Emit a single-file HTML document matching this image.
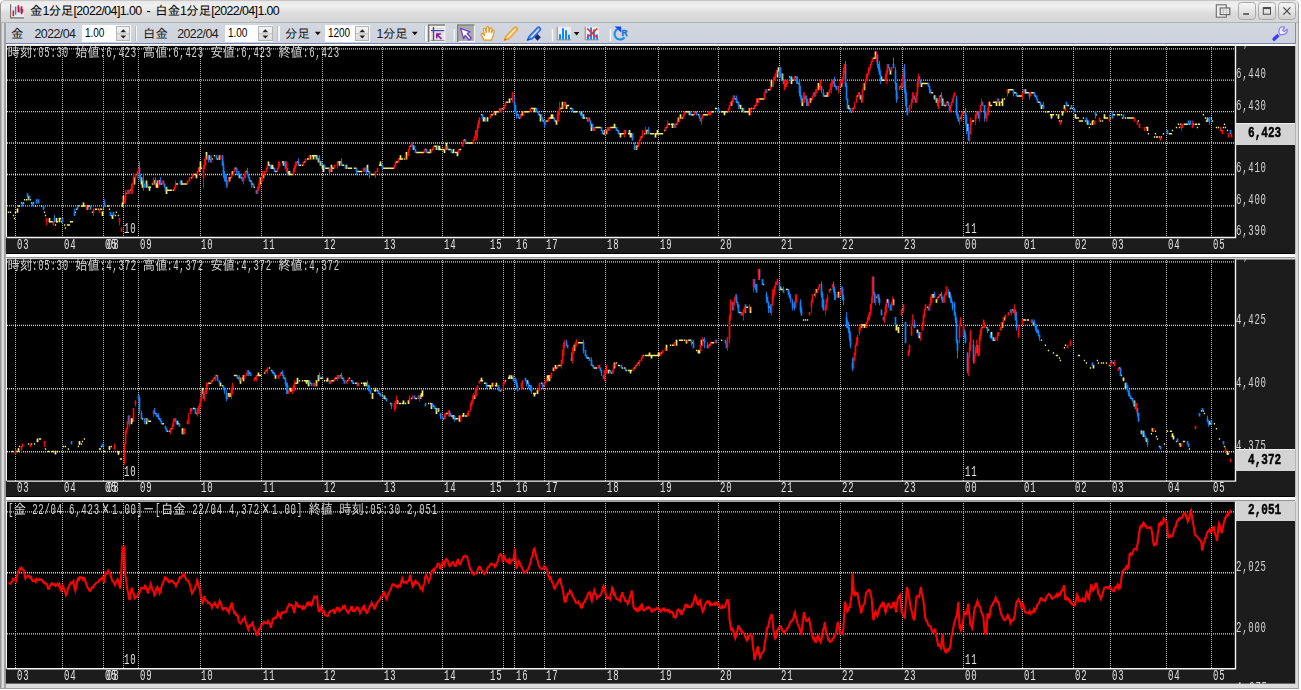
<!DOCTYPE html><html lang="ja"><head><meta charset="utf-8"><title>chart</title><style>
html,body{margin:0;padding:0}
body{width:1301px;height:690px;background:#fff;overflow:hidden;position:relative;font-family:"Liberation Sans","IPAGothic",sans-serif}
#win{position:absolute;left:0;top:0;width:1299px;height:689px;box-sizing:border-box;border:1px solid #a2a2a2;border-left:1.3px solid #959595;border-top-color:#c8c8c8;border-radius:5px 5px 0 0;background:linear-gradient(90deg,#b8b8b8 0,#b8b8b8 1px,#dedede 1.2px,#d8d8d8 3.3px,#a2a2a2 3.4px,#a2a2a2 4.6px,#dcdcdc 4.7px);overflow:hidden}
#title{position:absolute;left:0;top:0;width:1299px;height:22.2px;background:linear-gradient(#e6e6e6 0,#eaeaea 1px,#f0f0f0 5px,#eaeaea 8px,#dcdcdc 12px,#d7d7d7 20.7px,#b2b2b2 20.9px,#b2b2b2 22.2px);}
#ttext{position:absolute;left:30px;top:4px;font-size:12.4px;line-height:14px;color:#000;white-space:nowrap;letter-spacing:-0.6px;word-spacing:2.3px}
#ttext .j{letter-spacing:0}
#tool{position:absolute;left:5.8px;top:23.2px;width:1289.5px;height:19.6px;background:linear-gradient(#d3d7e0,#ced2dc);box-sizing:border-box}
#toolr{position:absolute;left:1295.2px;top:23px;width:1.2px;height:21px;background:#8e8e8e}
#toolb{position:absolute;left:5.8px;top:42.8px;width:1289.5px;height:1.5px;background:#7486a6}
#toolw{position:absolute;left:5.8px;top:44.3px;width:1289.5px;height:1.7px;background:#fdfdfd}
.tt{position:absolute;top:27.2px;font-size:12.4px;line-height:14px;color:#1a1a1a;white-space:nowrap;letter-spacing:-0.55px}
.tt .j{letter-spacing:0}
.inp{position:absolute;top:24.6px;height:17.6px;background:#fff;box-sizing:border-box}
.inp span{position:absolute;left:3.2px;top:1.4px;font-size:12.2px;line-height:14px;letter-spacing:-0.1px;color:#000;transform:scaleX(.82);transform-origin:0 0;white-space:nowrap}
.spin{position:absolute;right:0.5px;top:1px;width:14.5px;height:15.6px;background:linear-gradient(#f4f4f4,#dcdcdc);border:1px solid #b4b4b4;box-sizing:border-box}
.sep{position:absolute;top:26px;width:1.3px;height:15px;background:#f6f6f6;border-left:1px solid #b9bfcb}
.m{position:absolute;white-space:pre;font-family:"Liberation Mono","IPAGothic",monospace;font-size:12px;line-height:13px;color:#d6d6d6}
.m .j{font-size:12.3px;display:inline-block;transform:scaleY(1.13);transform-origin:0 58%}
.m .l{display:inline-block;letter-spacing:1px;transform:scale(.75,1.27);transform-origin:0 62%}
.m .x{display:inline-block;width:16.4px;text-align:center;font-style:normal;font-size:17px;line-height:10px;vertical-align:-1px}
.tl{color:#e2e2e2}
#txt{position:absolute;left:0;top:0;width:1301px;height:690px;will-change:transform;opacity:.999}
.box{position:absolute;left:1236.1px;width:59.1px;height:22.3px;background:#d4d4d4;border-top:1px solid #efefef;box-sizing:border-box}
.box b{position:absolute;left:11.8px;top:4.4px;font-family:"Liberation Mono",monospace;font-size:12px;line-height:13px;color:#000;font-weight:bold;-webkit-text-stroke:.35px #000;transform:scale(.92,1.2);transform-origin:0 62%;white-space:pre}
.band{position:absolute;left:5.9px;width:1289.3px;background:#fff}
.wb{position:absolute;top:2.3px;width:17.4px;height:17.3px;border:1px solid #a9a9a9;border-radius:3.5px;box-sizing:border-box;background:linear-gradient(#f6f6f6,#e4e4e4 50%,#d0d0d0)}
</style></head><body>
<div id="win">
<div id="title"></div>
</div>
<svg style="position:absolute;left:10px;top:4px" width="15" height="15" viewBox="0 0 15 15"><rect x="0.5" y="0.3" width="13.6" height="13.6" fill="#f1f1f1"/><path d="M0.6 0.3V13.8H14" stroke="#6e6e6e" stroke-width="1.2" fill="none"/><path d="M1.5 3.5H13.5M1.5 6H13.5M1.5 8.5H13.5M1.5 11H13.5" stroke="#dcdcdc" stroke-width=".7"/><path d="M3.3 6.5V12.2M8.3 1.2V8.2M11.6 2.3V10.2" stroke="#f01" stroke-width="1.5"/><path d="M5.6 2.4V10.8M9.9 3.6V8.8" stroke="#1389f2" stroke-width="1.4"/><path d="M12.6 5V8.6" stroke="#f01" stroke-width="1"/></svg>
<div id="ttext"><span class="j">金</span>1<span class="j">分足</span>[2022/04]1.00 - <span class="j">白金</span>1<span class="j">分足</span>[2022/04]1.00</div>
<svg style="position:absolute;left:1215px;top:3px" width="17" height="17" viewBox="0 0 17 17"><rect x="1.3" y="1.8" width="10" height="12.4" fill="#efefef" stroke="#6c6c6c" stroke-width="1.1"/><rect x="5.2" y="5" width="9.6" height="6.6" fill="#f4f4f4" stroke="#5a5a5a" stroke-width="1.1"/><path d="M5.6 7.2H14.4M5.6 9.4H14.4M8.4 5.4V11.2M11.4 5.4V11.2" stroke="#b9b9b9" stroke-width=".7"/></svg>
<div class="wb" style="left:1238.3px"><svg width="16" height="16" viewBox="0 0 16 16" style="position:absolute;left:0;top:0"><path d="M4.2 11H10" stroke="#4a4a4a" stroke-width="1.6"/></svg></div>
<div class="wb" style="left:1258.3px"><svg width="16" height="16" viewBox="0 0 16 16" style="position:absolute;left:0;top:0"><rect x="4.3" y="4.6" width="7.2" height="6.6" fill="none" stroke="#4a4a4a" stroke-width="1"/><path d="M4 5.2H11.8" stroke="#4a4a4a" stroke-width="1.8"/></svg></div>
<div class="wb" style="left:1278.3px"><svg width="16" height="16" viewBox="0 0 16 16" style="position:absolute;left:0;top:0"><path d="M4.4 4.4L11.4 11.6M11.4 4.4L4.4 11.6" stroke="#4a4a4a" stroke-width="1.3"/></svg></div>
<div id="tool"></div><div id="toolb"></div><div id="toolw"></div><div id="toolr"></div>
<div class="tt" style="left:11px"><span class="j">金</span></div>
<div class="tt" style="left:34.5px">2022/04</div>
<div class="inp" style="left:82px;width:48.5px"><span>1.00</span><div class="spin"><svg width="13" height="14" viewBox="0 0 13 14" style="position:absolute;left:0;top:0"><path d="M3.4 5.3L6.3 2.2L9.2 5.3ZM3.4 8.4L6.3 11.5L9.2 8.4Z" fill="#222"/><path d="M0 6.8H13" stroke="#b4b4b4" stroke-width=".8"/></svg></div></div>
<div class="sep" style="left:134.6px"></div>
<div class="tt" style="left:143px"><span class="j">白金</span></div>
<div class="tt" style="left:177.2px">2022/04</div>
<div class="inp" style="left:224.5px;width:48.5px"><span>1.00</span><div class="spin"><svg width="13" height="14" viewBox="0 0 13 14" style="position:absolute;left:0;top:0"><path d="M3.4 5.3L6.3 2.2L9.2 5.3ZM3.4 8.4L6.3 11.5L9.2 8.4Z" fill="#222"/><path d="M0 6.8H13" stroke="#b4b4b4" stroke-width=".8"/></svg></div></div>
<div class="sep" style="left:277.3px"></div>
<div class="tt" style="left:285px"><span class="j">分足</span></div>
<svg style="position:absolute;left:314px;top:31px" width="8" height="5" viewBox="0 0 8 5"><path d="M0.8 0.8H6.8L3.8 4.2Z" fill="#111"/></svg>
<div class="inp" style="left:324.6px;width:45px"><span>1200</span><div class="spin"><svg width="13" height="14" viewBox="0 0 13 14" style="position:absolute;left:0;top:0"><path d="M3.4 5.3L6.3 2.2L9.2 5.3ZM3.4 8.4L6.3 11.5L9.2 8.4Z" fill="#222"/><path d="M0 6.8H13" stroke="#b4b4b4" stroke-width=".8"/></svg></div></div>
<div class="tt" style="left:376.6px">1<span class="j">分足</span></div>
<svg style="position:absolute;left:411px;top:31px" width="8" height="5" viewBox="0 0 8 5"><path d="M0.8 0.8H6.8L3.8 4.2Z" fill="#111"/></svg>
<div class="sep" style="left:424.3px"></div>
<svg style="position:absolute;left:426px;top:22px" width="210" height="22" viewBox="426 22 210 22">
<!-- button 1 -->
<rect x="428.6" y="24.9" width="16.2" height="16.8" fill="#f3f3ee" stroke="#fafafa" stroke-width="1"/>
<path d="M428.7 42V25H445" stroke="#7c7c7c" stroke-width="1.5" fill="none"/>
<path d="M431 28.4H444M431 30.4H444M431 32.6H444M431 34.8H444M431 37H444M431 39.2H444" stroke="#cfcfc4" stroke-width=".9"/>
<path d="M430.6 40.6H444.4" stroke="#8c8c8c" stroke-width="1"/>
<path d="M433.5 27V40.6M431 30.7H444.2" stroke="#3b3fb2" stroke-width="1.3"/>
<path d="M436 33.2H441V34.6L438.8 35.2L442 38.3L440.8 39.4L437.7 36.3L437.2 38.4H436Z" fill="#8a1db0"/>
<!-- sep -->
<rect x="453.6" y="29" width="1.3" height="12" fill="#f8f8f8"/>
<!-- button 2 -->
<rect x="457.8" y="24.9" width="16.6" height="16.6" fill="#a9acaa" stroke="#fafafa" stroke-width="1"/>
<path d="M457.8 42V25H474.6" stroke="#7c7c7c" stroke-width="1.5" fill="none"/>
<path d="M460.6 28.4L470 31.8L467.2 33.6L471.2 38.2L469.2 40L465.2 35.5L463.6 38.6Z" fill="#fff" stroke="#6a40c4" stroke-width="1.3" stroke-linejoin="round"/>
<!-- hand -->
<path d="M484.2 40.2C483 38 482 36.5 481.2 34.8C480.8 33.6 482.2 33 483.2 34L484.6 35.4L483.4 29.6C483.2 28.2 485 27.8 485.4 29.2L486.4 32.4L486.6 27.6C486.6 26.2 488.6 26.2 488.7 27.6L489 32.2L490 28.4C490.4 27.2 492.2 27.6 492 29L491.4 33L492.6 30.8C493.2 29.8 494.6 30.4 494.2 31.6C493.6 34.6 493 37.4 491.4 40.2Z" fill="#fff8ec" stroke="#e09a30" stroke-width="1.2" stroke-linejoin="round"/>
<!-- pencil -->
<path d="M504.2 40.4L505.6 36.6L514.4 27.2C515.6 26 518.6 28.2 517.4 29.8L508.4 39.2Z" fill="#f8b860" stroke="#ee9e2c" stroke-width="1.2" stroke-linejoin="round"/>
<path d="M507.4 37.6L515.6 29" stroke="#fff6e2" stroke-width="1.3"/>
<path d="M504.2 40.4L505 38.4L506.4 39.6Z" fill="#9a6414"/>
<!-- marker -->
<path d="M534.2 37.3L537.5 33.9L540.8 37.3L537.5 40.7Z" fill="#122c78"/>
<path d="M527.2 40.2L529 36.4L537.4 27.4C538.8 26 541.8 28.4 540.4 30.2L532 39Z" fill="#5a90ee" stroke="#2a66d8" stroke-width="1.2" stroke-linejoin="round"/>
<path d="M531 37.4L538.8 29.2" stroke="#e4eeff" stroke-width="1.3"/>
<path d="M527 40.4L528.4 38L530 39.4Z" fill="#1a4fc0"/>

<!-- sep -->
<rect x="551.8" y="29" width="1.3" height="12" fill="#f8f8f8"/>
<!-- bar chart -->
<rect x="557.2" y="26.8" width="13.8" height="13" fill="#ededed"/>
<path d="M557.2 26.8V39.8H571" stroke="#8a8a8a" stroke-width="1" fill="none"/>
<path d="M560 39.6V34.2M563 39.6V28.2M566 39.6V30.2M569 39.6V34.8" stroke="#1088ff" stroke-width="2"/>
<path d="M573.8 32H579.4L576.6 35.6Z" fill="#111"/>
<!-- bar chart X -->
<rect x="585.2" y="26.8" width="13.8" height="13" fill="#ededed"/>
<path d="M585.2 26.8V39.8H599" stroke="#8a8a8a" stroke-width="1" fill="none"/>
<path d="M588 39.6V34.2M591 39.6V27.6M594 39.6V29.6M597 39.6V34.6" stroke="#1088ff" stroke-width="2"/>
<path d="M587 28.4L597.4 38M597.4 28.4L587 38" stroke="#ff2a2a" stroke-width="1.5"/>
<!-- sep -->
<rect x="609.8" y="29" width="1.3" height="12" fill="#f8f8f8"/>
<!-- refresh -->
<path d="M618.6 28.6A5.6 5.6 0 1 0 624.6 37.4" fill="none" stroke="#1b8fe2" stroke-width="2.1"/>
<path d="M614.6 26.4H621.2V32.4Z" fill="#1546ff"/>
<text x="621.6" y="36.2" font-family="Liberation Sans, sans-serif" font-weight="bold" font-size="8.4" fill="#1277d8" stroke="#1277d8" stroke-width=".4">R</text>
</svg>
<svg style="position:absolute;left:1270px;top:24px" width="20" height="19" viewBox="1270 24 20 19">
<path d="M1274 39.2L1278.8 34.6" stroke="#3838ff" stroke-width="3.3" stroke-linecap="round"/>
<path d="M1278.4 34.9L1279.6 33.6" stroke="#f2f0ff" stroke-width="3.2"/>
<path d="M1284.6 27.2C1282 25.9 1279.2 27.6 1279 30.4C1278.9 31.8 1279.2 32.8 1279 33.6L1280.2 34.8C1281.6 34.3 1283.4 35 1285 34C1286.8 33 1287.6 31 1287 29.2L1284.2 31.6L1282.6 30.2Z" fill="#efecff" stroke="#7a76e6" stroke-width="1.1" stroke-linejoin="round"/>
</svg>

<svg width="1301" height="690" viewBox="0 0 1301 690" style="position:absolute;left:0;top:0">
<rect x="5.9" y="45.9" width="1289.3" height="207.1" fill="#1c1c1c"/>
<rect x="5.9" y="44.4" width="1289.3" height="1.5" fill="#fdfdfd"/>
<rect x="5.9" y="44.4" width="1.2" height="193.1" fill="#f4f4f4"/>
<rect x="7" y="45.9" width="1228.5" height="191.6" fill="#000"/>
<rect x="5.9" y="259.3" width="1289.3" height="236.7" fill="#1c1c1c"/>
<rect x="5.9" y="257.8" width="1289.3" height="1.5" fill="#d6d6d6"/>
<rect x="5.9" y="257.8" width="1.2" height="223.3" fill="#f4f4f4"/>
<rect x="7" y="259.3" width="1228.5" height="221.8" fill="#000"/>
<rect x="5.9" y="501.8" width="1289.3" height="181.8" fill="#1c1c1c"/>
<rect x="5.9" y="500.3" width="1289.3" height="1.5" fill="#d6d6d6"/>
<rect x="5.9" y="500.3" width="1.2" height="168.4" fill="#f4f4f4"/>
<rect x="7" y="501.8" width="1228.5" height="166.9" fill="#000"/>
<path d="M7 48.8H1235.5M7 80.1H1235.5M7 111.6H1235.5M7 143H1235.5M7 174.5H1235.5M7 205.9H1235.5M7 261.8H1235.5M7 325.4H1235.5M7 388.7H1235.5M7 451.7H1235.5M7 511.8H1235.5M7 572.7H1235.5M7 633.8H1235.5" stroke="#d0d0d0" stroke-width="1.35" stroke-dasharray="1 1" fill="none"/>
<path d="M15.5 47V237.5M62.5 47V237.5M103.5 47V237.5M123.5 47V237.5M138.5 47V237.5M200.5 47V237.5M261.5 47V237.5M322.5 47V237.5M382.5 47V237.5M442.5 47V237.5M503.5 47V237.5M514.5 47V237.5M544.5 47V237.5M605.5 47V237.5M658.5 47V237.5M718.5 47V237.5M779.5 47V237.5M840.5 47V237.5M902.5 47V237.5M963.5 47V237.5M1022.5 47V237.5M1073.5 47V237.5M1110.5 47V237.5M1166.5 47V237.5M1211.5 47V237.5M15.5 260V481.1M62.5 260V481.1M103.5 260V481.1M123.5 260V481.1M138.5 260V481.1M200.5 260V481.1M261.5 260V481.1M322.5 260V481.1M382.5 260V481.1M442.5 260V481.1M503.5 260V481.1M514.5 260V481.1M544.5 260V481.1M605.5 260V481.1M658.5 260V481.1M718.5 260V481.1M779.5 260V481.1M840.5 260V481.1M902.5 260V481.1M963.5 260V481.1M1022.5 260V481.1M1073.5 260V481.1M1110.5 260V481.1M1166.5 260V481.1M1211.5 260V481.1M15.5 503V668.7M62.5 503V668.7M103.5 503V668.7M123.5 503V668.7M138.5 503V668.7M200.5 503V668.7M261.5 503V668.7M322.5 503V668.7M382.5 503V668.7M442.5 503V668.7M503.5 503V668.7M514.5 503V668.7M544.5 503V668.7M605.5 503V668.7M658.5 503V668.7M718.5 503V668.7M779.5 503V668.7M840.5 503V668.7M902.5 503V668.7M963.5 503V668.7M1022.5 503V668.7M1073.5 503V668.7M1110.5 503V668.7M1166.5 503V668.7M1211.5 503V668.7" stroke="#bcbcbc" stroke-width="1" stroke-dasharray="1 1" fill="none"/>
<path d="M7 237.5H1235.5V45.9M7 481.1H1235.5V259.3M7 668.7H1235.5V501.8" stroke="#f4f4f4" stroke-width="1.4" fill="none"/>
<g fill="none" stroke-width="1.7">
<path d="M7.8 212.3h1.3M9.8 212.3h1.3M12.8 215.5h1.3M13.8 218.6h1.3M14.8 212.3h1.3M16.9 209.2h1.3M17.9 206.1h1.3M18.9 206.1h1.3M20.9 202.9h1.3M22.9 202.9h1.3M23.9 199.8h1.3M25.9 199.8h1.3M27.9 196.6h1.3M29.9 199.8h1.3M30.9 202.9h1.3M32.9 202.9h1.3M34.9 206.1h1.3M40.9 206.1h1.3M43.9 212.3h1.3M44.9 215.5h1.3M48.9 221.8h1.3M49.9 221.8h1.3M50.9 221.8h1.3M51.9 221.8h1.3M54.9 224.9h1.3M55.9 221.8h1.3M56.9 221.8h1.3M58.9 218.6h1.3M59.9 218.6h1.3M60.9 221.8h1.3M63.9 224.9h1.3M64.8 228.1h1.3M66.8 224.9h1.3M67.8 224.9h1.3M68.8 224.9h1.3M69.8 221.8h1.3M70.8 221.8h1.3M71.8 221.8h1.3M74.8 212.3h1.3M75.8 209.2h1.3M77.8 206.1h1.3M80.8 206.1h1.3M81.8 206.1h1.3M82.8 206.1h1.3M83.8 206.1h1.3M86.8 206.1h1.3M87.8 206.1h1.3M88.8 206.1h1.3M91.8 212.3h1.3M94.8 209.2h1.3M95.8 209.2h1.3M97.8 209.2h1.3M99.8 209.2h1.3M100.8 209.2h1.3M101.8 212.3h1.3M102.8 209.2h1.3M106.8 206.1h1.3M107.8 206.1h1.3M108.8 209.2h1.3M110.8 215.5h1.3M111.8 215.5h1.3M114.8 215.5h1.3M115.8 212.3h1.3M117.8 215.5h1.3M121.8 206.1h1.3M125.8 193.5h1.3M129.8 190.3h1.3M135.8 174.6h1.3M147.8 187.2h1.3M148.8 187.2h1.3M149.8 187.2h1.3M151.8 184h1.3M153.8 180.9h1.3M155.8 184h1.3M158.8 180.9h1.3M160.8 184h1.3M166.8 190.3h1.3M167.8 190.3h1.3M168.8 190.3h1.3M169.8 190.3h1.3M170.8 190.3h1.3M172.8 190.3h1.3M175.8 184h1.3M176.8 184h1.3M180.8 184h1.3M181.8 184h1.3M182.8 184h1.3M183.8 184h1.3M184.8 184h1.3M185.8 184h1.3M190.8 177.7h1.3M192.8 174.6h1.3M193.8 174.6h1.3M194.8 174.6h1.3M195.8 174.6h1.3M198.8 168.3h1.3M200.8 168.3h1.3M208.8 158.9h1.3M211.8 158.9h1.3M213.8 155.7h1.3M216.8 158.9h1.3M218.8 158.9h1.3M228.8 177.7h1.3M229.8 177.7h1.3M231.8 174.6h1.3M234.8 168.3h1.3M238.8 174.6h1.3M240.8 177.7h1.3M245.8 171.5h1.3M249.8 180.9h1.3M251.8 184h1.3M253.8 187.2h1.3M262.9 174.6h1.3M267.9 165.2h1.3M268.9 165.2h1.3M270.9 168.3h1.3M271.9 168.3h1.3M272.9 168.3h1.3M274.9 171.5h1.3M275.9 171.5h1.3M281.9 162h1.3M282.9 162h1.3M287.9 174.6h1.3M288.9 174.6h1.3M289.9 174.6h1.3M290.9 174.6h1.3M291.9 174.6h1.3M296.9 162h1.3M298.9 165.2h1.3M299.9 165.2h1.3M301.9 165.2h1.3M303.9 162h1.3M306.9 158.9h1.3M307.9 158.9h1.3M309.9 155.7h1.3M311.9 155.7h1.3M312.9 155.7h1.3M313.9 155.7h1.3M314.9 155.7h1.3M315.9 155.7h1.3M317.9 158.9h1.3M319.9 162h1.3M321.9 165.2h1.3M324.9 168.3h1.3M325.9 168.3h1.3M326.9 168.3h1.3M327.9 168.3h1.3M331.9 168.3h1.3M332.9 168.3h1.3M337.9 162h1.3M338.9 162h1.3M339.9 162h1.3M341.9 165.2h1.3M342.9 165.2h1.3M345.9 168.3h1.3M347.9 168.3h1.3M348.9 168.3h1.3M349.9 168.3h1.3M350.9 168.3h1.3M353.9 168.3h1.3M354.9 168.3h1.3M356.9 171.5h1.3M357.9 171.5h1.3M358.9 171.5h1.3M359.9 171.5h1.3M360.9 171.5h1.3M367.9 171.5h1.3M370.9 174.6h1.3M371.9 174.6h1.3M372.9 174.6h1.3M373.9 174.6h1.3M378.9 165.2h1.3M379.9 165.2h1.3M380.9 165.2h1.3M382.9 168.3h1.3M383.9 168.3h1.3M384.9 168.3h1.3M385.9 168.3h1.3M386.9 168.3h1.3M387.9 168.3h1.3M388.9 168.3h1.3M389.9 168.3h1.3M390.9 168.3h1.3M391.9 168.3h1.3M392.9 168.3h1.3M395.9 162h1.3M396.9 162h1.3M398.9 158.9h1.3M399.9 158.9h1.3M400.9 158.9h1.3M401.9 158.9h1.3M403.9 158.9h1.3M409.9 146.3h1.3M412.9 146.3h1.3M415.9 152.6h1.3M416.9 152.6h1.3M417.9 152.6h1.3M418.9 152.6h1.3M419.9 152.6h1.3M420.9 152.6h1.3M421.9 152.6h1.3M422.9 152.6h1.3M424.9 149.4h1.3M426.9 152.6h1.3M427.9 152.6h1.3M428.9 152.6h1.3M429.9 152.6h1.3M431.9 149.4h1.3M433.9 146.3h1.3M434.9 146.3h1.3M435.9 146.3h1.3M437.9 149.4h1.3M438.9 149.4h1.3M439.9 149.4h1.3M440.9 149.4h1.3M441.9 149.4h1.3M442.9 149.4h1.3M443.9 149.4h1.3M447.9 149.4h1.3M448.9 149.4h1.3M449.9 149.4h1.3M451.9 152.6h1.3M452.9 152.6h1.3M454.9 152.6h1.3M455.9 152.6h1.3M456.9 152.6h1.3M458.9 149.4h1.3M459.9 149.4h1.3M463.9 140h1.3M465.9 143.1h1.3M466.9 143.1h1.3M467.9 143.1h1.3M468.9 143.1h1.3M469.9 143.1h1.3M470.9 143.1h1.3M471.9 143.1h1.3M480.9 114.8h1.3M482.9 118h1.3M483.9 118h1.3M486.9 118h1.3M490.9 114.8h1.3M491.9 114.8h1.3M493.9 111.7h1.3M494.9 111.7h1.3M495.9 111.7h1.3M496.9 111.7h1.3M497.9 111.7h1.3M501.9 108.6h1.3M505.9 102.3h1.3M506.9 102.3h1.3M508.9 102.3h1.3M510.9 99.1h1.3M516.9 114.8h1.3M518.9 118h1.3M520.9 114.8h1.3M521.9 114.8h1.3M523.9 111.7h1.3M524.9 111.7h1.3M525.9 111.7h1.3M526.9 111.7h1.3M527.9 111.7h1.3M530.9 108.6h1.3M531.9 108.6h1.3M532.9 108.6h1.3M533.9 108.6h1.3M534.9 108.6h1.3M536.9 111.7h1.3M538.9 114.8h1.3M542.9 121.1h1.3M545.9 121.1h1.3M546.9 121.1h1.3M548.9 118h1.3M549.9 118h1.3M550.9 118h1.3M551.9 118h1.3M552.9 118h1.3M554.9 121.1h1.3M555.9 121.1h1.3M559.9 108.6h1.3M560.9 108.6h1.3M565.9 105.4h1.3M566.9 105.4h1.3M567.9 105.4h1.3M569.9 108.6h1.3M570.9 108.6h1.3M572.9 111.7h1.3M573.9 111.7h1.3M574.9 111.7h1.3M575.9 111.7h1.3M578.9 111.7h1.3M580.9 114.8h1.3M582.9 118h1.3M583.9 118h1.3M585.9 118h1.3M594.9 127.4h1.3M595.9 127.4h1.3M596.9 127.4h1.3M597.9 127.4h1.3M598.9 127.4h1.3M599.9 127.4h1.3M602.9 133.7h1.3M603.9 133.7h1.3M605.9 130.6h1.3M609.9 127.4h1.3M610.9 127.4h1.3M611.9 127.4h1.3M612.9 127.4h1.3M613.9 127.4h1.3M614.9 127.4h1.3M616.9 130.6h1.3M618.9 133.7h1.3M619.9 133.7h1.3M620.9 133.7h1.3M621.9 133.7h1.3M622.9 133.7h1.3M627.9 133.7h1.3M628.9 133.7h1.3M629.9 133.7h1.3M630.9 133.7h1.3M635.9 146.3h1.3M636.9 146.3h1.3M640.9 136.9h1.3M643.9 133.7h1.3M645.9 130.6h1.3M646.9 130.6h1.3M649.9 133.7h1.3M650.9 133.7h1.3M651.9 133.7h1.3M652.9 133.7h1.3M654.9 133.7h1.3M655.9 133.7h1.3M656.9 133.7h1.3M657.9 133.7h1.3M658.9 133.7h1.3M659.9 133.7h1.3M660.9 133.7h1.3M661.9 133.7h1.3M663.9 130.6h1.3M665.9 127.4h1.3M667.9 124.3h1.3M668.9 124.3h1.3M670.9 124.3h1.3M671.9 124.3h1.3M672.9 124.3h1.3M675.9 124.3h1.3M677.9 121.1h1.3M679.9 118h1.3M681.9 118h1.3M684.9 111.7h1.3M685.9 111.7h1.3M686.9 111.7h1.3M687.9 111.7h1.3M688.9 111.7h1.3M690.9 114.8h1.3M691.9 114.8h1.3M692.9 114.8h1.3M694.9 111.7h1.3M697.9 114.8h1.3M702.9 114.8h1.3M703.9 114.8h1.3M704.9 114.8h1.3M705.9 114.8h1.3M706.9 114.8h1.3M710.9 111.7h1.3M711.9 111.7h1.3M712.9 111.7h1.3M714.9 108.6h1.3M715.9 108.6h1.3M718.9 111.7h1.3M720.9 111.7h1.3M721.9 111.7h1.3M722.9 111.7h1.3M723.9 111.7h1.3M724.9 111.7h1.3M725.9 111.7h1.3M726.9 111.7h1.3M730.9 102.3h1.3M734.9 99.1h1.3M736.9 102.3h1.3M738.9 105.4h1.3M739.9 105.4h1.3M741.9 108.6h1.3M743.9 111.7h1.3M744.9 111.7h1.3M745.9 111.7h1.3M746.9 111.7h1.3M747.9 111.7h1.3M750.9 108.6h1.3M752.9 108.6h1.3M754.9 105.4h1.3M756.9 102.3h1.3M758.9 99.1h1.3M759.9 99.1h1.3M760.9 99.1h1.3M761.9 99.1h1.3M762.9 99.1h1.3M767.9 89.7h1.3M768.9 89.7h1.3M777.9 70.8h1.3M788.9 77.1h1.3M791.9 80.2h1.3M792.9 80.2h1.3M794.9 77.1h1.3M797.9 83.4h1.3M809.9 99.1h1.3M810.9 99.1h1.3M818.9 86.5h1.3M823.9 96h1.3M824.9 96h1.3M825.9 96h1.3M826.9 96h1.3M834.9 86.5h1.3M840.9 83.4h1.3M847.9 108.6h1.3M848.9 108.6h1.3M850.9 111.7h1.3M852.9 108.6h1.3M856.9 96h1.3M859.9 96h1.3M872.9 58.2h1.3M873.9 58.2h1.3M880.9 80.2h1.3M881.9 80.2h1.3M882.9 80.2h1.3M883.9 80.2h1.3M889.9 70.8h1.3M899.9 86.5h1.3M920.9 83.4h1.3M921.9 83.4h1.3M922.9 83.4h1.3M923.9 83.4h1.3M924.9 83.4h1.3M925.9 83.4h1.3M926.9 83.4h1.3M930.9 92.8h1.3M931.9 92.8h1.3M933.9 96h1.3M935.9 99.1h1.3M939.9 96h1.3M943.9 105.4h1.3M944.9 105.4h1.3M946.9 102.3h1.3M959.9 118h1.3M962.9 111.7h1.3M963.9 111.7h1.3M971.9 121.1h1.3M972.9 121.1h1.3M988.9 105.4h1.3M989.9 105.4h1.3M990.9 105.4h1.3M992.9 102.3h1.3M993.9 102.3h1.3M994.9 102.3h1.3M995.9 102.3h1.3M998.9 102.3h1.3M1000.9 102.3h1.3M1003.9 99.1h1.3M1007.9 89.7h1.3M1008.9 89.7h1.3M1009.9 89.7h1.3M1010.9 89.7h1.3M1011.9 89.7h1.3M1013.9 92.8h1.3M1014.9 92.8h1.3M1016.9 96h1.3M1017.9 96h1.3M1018.9 96h1.3M1019.9 96h1.3M1020.9 96h1.3M1024.8 92.8h1.3M1025.8 92.8h1.3M1026.8 92.8h1.3M1027.8 92.8h1.3M1030.8 92.8h1.3M1031.8 92.8h1.3M1032.8 92.8h1.3M1034.8 96h1.3M1037.8 102.3h1.3M1038.8 102.3h1.3M1040.8 105.4h1.3M1041.8 105.4h1.3M1044.8 111.7h1.3M1046.8 111.7h1.3M1047.8 111.7h1.3M1049.8 114.8h1.3M1050.8 114.8h1.3M1051.8 114.8h1.3M1052.8 114.8h1.3M1055.8 114.8h1.3M1057.8 118h1.3M1058.8 121.1h1.3M1060.8 121.1h1.3M1061.8 114.8h1.3M1062.8 111.7h1.3M1063.8 108.6h1.3M1066.8 105.4h1.3M1067.8 105.4h1.3M1069.8 108.6h1.3M1071.8 108.6h1.3M1074.8 114.8h1.3M1075.8 118h1.3M1076.8 118h1.3M1077.8 118h1.3M1078.8 121.1h1.3M1079.8 121.1h1.3M1080.8 121.1h1.3M1081.8 121.1h1.3M1082.8 118h1.3M1084.8 121.1h1.3M1086.8 121.1h1.3M1088.8 127.4h1.3M1089.8 124.3h1.3M1091.8 124.3h1.3M1092.8 121.1h1.3M1095.8 114.8h1.3M1099.8 121.1h1.3M1101.8 121.1h1.3M1103.8 118h1.3M1104.8 118h1.3M1105.8 118h1.3M1106.8 118h1.3M1109.8 118h1.3M1112.8 114.8h1.3M1113.8 114.8h1.3M1116.8 114.8h1.3M1117.8 114.8h1.3M1118.8 114.8h1.3M1120.8 114.8h1.3M1121.8 118h1.3M1124.8 118h1.3M1126.8 118h1.3M1127.8 118h1.3M1128.8 118h1.3M1129.8 118h1.3M1130.8 118h1.3M1131.8 118h1.3M1132.8 118h1.3M1137.8 121.1h1.3M1145.8 127.4h1.3M1146.8 127.4h1.3M1147.8 133.7h1.3M1150.8 143.1h1.3M1153.8 136.9h1.3M1154.8 133.7h1.3M1155.8 136.9h1.3M1156.8 136.9h1.3M1158.8 136.9h1.3M1160.8 136.9h1.3M1162.8 133.7h1.3M1168.8 133.7h1.3M1169.8 133.7h1.3M1170.8 133.7h1.3M1171.8 130.6h1.3M1175.8 127.4h1.3M1177.8 124.3h1.3M1178.8 127.4h1.3M1179.8 124.3h1.3M1183.8 124.3h1.3M1184.8 124.3h1.3M1185.8 124.3h1.3M1186.8 124.3h1.3M1188.8 124.3h1.3M1192.8 124.3h1.3M1194.8 124.3h1.3M1195.8 124.3h1.3M1196.8 127.4h1.3M1197.8 124.3h1.3M1198.8 124.3h1.3M1202.8 114.8h1.3M1204.8 118h1.3M1205.8 121.1h1.3M1206.8 121.1h1.3M1210.8 118h1.3M1211.8 121.1h1.3M1215.8 127.4h1.3M1217.8 127.4h1.3M1220.8 130.6h1.3M1222.8 127.4h1.3M1223.8 124.3h1.3M1224.8 127.4h1.3M1226.8 130.6h1.3" stroke="#f4ec70" stroke-width="1.5"/>
<path d="M17.5 208.7V212.8M28.5 196.1V200.3M49.5 218.1V222.3M56.5 218.1V222.3M59.5 218.1V222.3M83.5 202.4V206.6M87.5 205.6V209.7M102.5 211.8V216M112.5 215V219.1M122.5 202.4V206.6M123.5 196.1V203.4M134.5 177.2V184.5M141.5 177.2V184.5M142.5 180.4V187.7M146.5 180.4V187.7M149.5 186.7V190.8M154.5 180.4V184.5M156.5 183.5V187.7M157.5 180.4V187.7M159.5 180.4V184.5M166.5 186.7V194M181.5 180.4V184.5M196.5 174.1V178.2M199.5 167.8V172M200.5 161.5V168.8M206.5 152.1V159.4M209.5 155.2V159.4M219.5 155.2V159.4M229.5 177.2V181.4M232.5 171V175.1M239.5 174.1V178.2M260.5 177.2V184.5M263.5 174.1V178.2M268.5 161.5V165.7M271.5 164.7V168.8M272.5 164.7V168.8M283.5 161.5V165.7M288.5 171V175.1M289.5 171V175.1M310.5 155.2V159.4M313.5 155.2V159.4M316.5 155.2V159.4M318.5 158.4V162.5M320.5 161.5V165.7M322.5 164.7V168.8M323.5 164.7V172M331.5 164.7V172M339.5 161.5V165.7M346.5 164.7V168.8M367.5 164.7V172M380.5 161.5V165.7M400.5 155.2V159.4M406.5 152.1V159.4M413.5 145.8V149.9M430.5 148.9V153.1M436.5 145.8V149.9M438.5 145.8V149.9M439.5 145.8V149.9M444.5 148.9V153.1M446.5 142.7V149.9M453.5 148.9V153.1M457.5 152.1V156.2M483.5 117.5V121.6M484.5 117.5V121.6M487.5 117.5V121.6M495.5 111.2V115.3M509.5 98.6V102.8M522.5 111.2V115.3M534.5 108.1V112.2M540.5 114.3V121.6M551.5 114.3V118.5M552.5 114.3V118.5M556.5 120.6V124.8M562.5 101.8V109.1M566.5 104.9V109.1M581.5 111.2V115.3M583.5 114.3V118.5M591.5 123.8V131.1M604.5 130.1V134.2M606.5 130.1V134.2M614.5 123.8V127.9M620.5 133.2V137.4M629.5 130.1V134.2M630.5 133.2V137.4M631.5 133.2V137.4M636.5 145.8V149.9M646.5 130.1V134.2M655.5 133.2V137.4M657.5 130.1V134.2M672.5 123.8V127.9M678.5 117.5V121.6M680.5 114.3V118.5M689.5 111.2V115.3M724.5 111.2V115.3M731.5 101.8V105.9M740.5 104.9V109.1M742.5 108.1V112.2M749.5 108.1V115.3M757.5 98.6V102.8M771.5 79.8V87M777.5 70.3V77.6M778.5 67.2V71.3M782.5 73.5V80.8M791.5 76.6V83.9M802.5 98.6V105.9M810.5 98.6V102.8M818.5 82.9V90.2M827.5 92.3V96.5M841.5 82.9V87M848.5 104.9V109.1M860.5 95.5V99.6M864.5 82.9V90.2M875.5 51.4V58.7M881.5 76.6V80.8M890.5 70.3V74.5M921.5 82.9V87M934.5 95.5V99.6M936.5 98.6V102.8M942.5 98.6V105.9M967.5 123.8V131.1M989.5 101.8V105.9M996.5 101.8V105.9M999.5 101.8V105.9M1002.5 98.6V105.9M1008.5 89.2V93.3M1025.5 89.2V93.3M1041.5 104.9V109.1M1051.5 114.3V118.5M1058.5 114.3V118.5M1062.5 111.2V115.3M1064.5 104.9V109.1M1075.5 114.3V118.5M1087.5 120.6V124.8M1092.5 120.6V124.8M1104.5 114.3V118.5M1147.5 126.9V131.1M1207.5 117.5V121.6" stroke="#f4ec70"/>
<path d="M22.5 202.4V206.6M27.5 193V197.1M29.5 196.1V200.3M32.5 202.4V206.6M36.5 199.3V203.4M38.5 199.3V203.4M43.5 205.5V209.7M54.5 218.1V222.3M62.5 218.1V222.3M74.5 211.8V216M77.5 205.5V209.7M90.5 205.5V209.7M104.5 202.4V206.6M110.5 211.8V216M113.5 211.8V216M128.5 189.8V194M139.5 167.8V178.2M140.5 177.2V181.4M143.5 180.4V184.5M144.5 183.5V187.7M147.5 183.5V187.7M155.5 180.4V184.5M160.5 180.4V184.5M163.5 180.4V184.5M164.5 183.5V187.7M165.5 186.7V190.8M180.5 180.4V184.5M208.5 155.2V159.4M210.5 158.4V162.5M216.5 155.2V159.4M222.5 155.2V165.7M223.5 164.7V175.1M224.5 174.1V178.2M225.5 177.2V181.4M226.5 180.4V184.5M236.5 167.8V172M238.5 171V175.1M240.5 174.1V178.2M242.5 177.2V181.4M247.5 171V175.1M248.5 174.1V178.2M249.5 177.2V181.4M251.5 180.4V184.5M253.5 183.5V187.7M256.5 189.8V194M270.5 164.7V168.8M274.5 167.8V172M284.5 161.5V165.7M285.5 164.7V168.8M287.5 167.8V175.1M298.5 161.5V165.7M317.5 155.2V159.4M319.5 158.4V162.5M321.5 161.5V165.7M324.5 164.7V168.8M329.5 167.8V172M341.5 161.5V165.7M345.5 164.7V168.8M356.5 167.8V172M364.5 167.8V172M366.5 167.8V172M369.5 171V175.1M382.5 164.7V168.8M412.5 142.6V146.8M414.5 145.8V149.9M415.5 148.9V153.1M426.5 148.9V153.1M437.5 145.8V149.9M447.5 145.8V149.9M451.5 148.9V153.1M465.5 139.5V143.6M482.5 114.3V118.5M485.5 117.5V121.6M500.5 108.1V112.2M514.5 101.8V105.9M515.5 104.9V112.2M516.5 111.2V115.3M518.5 114.3V118.5M536.5 108.1V112.2M538.5 111.2V115.3M541.5 114.3V118.5M542.5 117.5V121.6M544.5 120.6V124.8M554.5 117.5V121.6M565.5 101.8V105.9M572.5 108.1V112.2M580.5 111.2V115.3M582.5 114.3V118.5M587.5 117.5V121.6M589.5 117.5V121.6M590.5 120.6V124.8M592.5 123.8V127.9M593.5 126.9V131.1M601.5 126.9V131.1M602.5 130.1V134.2M608.5 126.9V131.1M616.5 126.9V131.1M618.5 130.1V134.2M625.5 130.1V134.2M632.5 133.2V140.5M634.5 145.8V149.9M648.5 130.1V134.2M674.5 123.8V127.9M690.5 111.2V115.3M696.5 111.2V115.3M699.5 114.3V118.5M700.5 117.5V121.6M709.5 111.2V115.3M718.5 108.1V112.2M734.5 95.5V99.6M736.5 98.6V102.8M738.5 101.8V105.9M743.5 108.1V112.2M766.5 89.2V93.3M779.5 70.3V74.5M780.5 67.2V77.6M781.5 73.5V80.8M783.5 79.8V83.9M785.5 82.9V87M790.5 76.6V80.8M796.5 76.6V80.8M797.5 79.8V83.9M799.5 82.9V93.3M800.5 92.3V96.5M801.5 95.5V102.8M805.5 95.5V99.6M806.5 98.6V102.8M807.5 101.8V105.9M814.5 92.3V96.5M821.5 86V90.2M823.5 92.3V96.5M833.5 79.8V83.9M834.5 82.9V87M836.5 86V90.2M845.5 64V87M846.5 86V99.6M847.5 98.6V109.1M850.5 108.1V112.2M859.5 92.3V96.5M861.5 95.5V99.6M877.5 54.6V65M878.5 64V68.2M879.5 67.2V74.5M880.5 73.5V80.8M888.5 64V68.2M889.5 67.2V71.3M893.5 64V68.2M895.5 70.3V83.9M896.5 82.9V99.6M904.5 70.3V90.2M905.5 89.2V99.6M906.5 98.6V109.1M907.5 108.1V115.3M914.5 95.5V99.6M915.5 98.6V102.8M919.5 76.6V80.8M920.5 79.8V83.9M928.5 82.9V87M929.5 86V90.2M930.5 89.2V93.3M935.5 95.5V99.6M937.5 98.6V102.8M941.5 95.5V102.8M943.5 101.8V105.9M948.5 101.8V105.9M949.5 104.9V112.2M956.5 98.6V115.3M957.5 114.3V118.5M958.5 117.5V121.6M965.5 111.2V118.5M966.5 117.5V127.9M968.5 126.9V140.5M977.5 111.2V115.3M978.5 114.3V118.5M982.5 101.8V105.9M984.5 104.9V112.2M985.5 111.2V118.5M998.5 98.6V102.8M1013.5 89.2V93.3M1016.5 92.3V96.5M1024.5 89.2V93.3M1029.5 92.3V96.5M1034.5 92.3V96.5M1036.5 95.5V99.6M1037.5 98.6V102.8M1040.5 101.8V105.9M1043.5 104.9V109.1M1066.5 101.8V105.9M1071.5 104.9V109.1M1074.5 108.1V112.2M1086.5 117.5V121.6M1088.5 120.6V124.8M1095.5 111.2V115.3M1112.5 114.3V118.5M1123.5 114.3V118.5M1167.5 130.1V134.2M1188.5 120.6V124.8M1190.5 120.6V124.8M1208.5 117.5V121.6M1209.5 117.5V121.6M1230.5 130.1V134.2" stroke="#0a84ff"/>
<path d="M46.5 218.1V222.3M53.5 221.3V225.4M86.5 205.6V209.7M93.5 208.7V212.8M99.5 208.7V212.8M119.5 218.1V222.3M121.5 227.6V231.7M124.5 199.3V203.4M125.5 193V200.3M127.5 189.8V194M129.5 189.8V194M131.5 186.7V190.8M132.5 183.5V187.7M133.5 177.2V184.5M135.5 174.1V178.2M137.5 171V175.1M138.5 167.8V172M153.5 180.4V184.5M158.5 180.4V184.5M162.5 180.4V184.5M174.5 186.7V190.8M175.5 183.5V187.7M187.5 180.4V184.5M189.5 177.2V181.4M192.5 174.1V178.2M197.5 171V175.1M198.5 167.8V172M203.5 167.8V178.2M204.5 164.7V168.8M205.5 158.4V165.7M207.5 155.2V159.4M211.5 158.4V162.5M220.5 155.2V159.4M227.5 180.4V184.5M228.5 177.2V181.4M231.5 174.1V178.2M233.5 171V175.1M234.5 167.8V172M243.5 177.2V181.4M244.5 174.1V178.2M245.5 171V175.1M257.5 189.8V194M258.5 186.7V190.8M259.5 180.4V187.7M261.5 177.2V181.4M262.5 174.1V178.2M264.5 171V175.1M266.5 167.8V172M267.5 164.7V168.8M277.5 167.8V172M278.5 164.7V168.8M279.5 161.5V165.7M286.5 161.5V172M293.5 171V175.1M294.5 167.8V172M295.5 164.7V168.8M296.5 161.5V165.7M303.5 161.5V165.7M305.5 158.4V162.5M309.5 155.2V159.4M330.5 167.8V172M334.5 164.7V168.8M337.5 161.5V165.7M363.5 167.8V172M365.5 167.8V172M375.5 171V175.1M377.5 167.8V172M394.5 164.7V168.8M395.5 161.5V165.7M398.5 158.4V162.5M405.5 155.2V159.4M408.5 148.9V153.1M409.5 145.8V149.9M411.5 142.6V146.8M424.5 148.9V153.1M431.5 148.9V153.1M433.5 145.8V149.9M445.5 145.8V149.9M458.5 148.9V153.1M462.5 142.6V146.8M463.5 139.5V143.6M473.5 139.5V143.6M474.5 136.4V140.5M475.5 133.2V137.4M476.5 130.1V134.2M477.5 126.9V131.1M478.5 120.6V127.9M479.5 117.5V121.6M490.5 114.3V118.5M493.5 111.2V115.3M499.5 108.1V112.2M501.5 108.1V112.2M504.5 104.9V109.1M505.5 101.8V105.9M512.5 92.3V99.6M520.5 114.3V118.5M523.5 111.2V115.3M530.5 108.1V112.2M545.5 120.6V124.8M548.5 117.5V121.6M557.5 114.3V121.6M558.5 111.2V115.3M559.5 108.1V112.2M563.5 104.9V109.1M564.5 101.8V105.9M588.5 117.5V121.6M594.5 126.9V131.1M605.5 130.1V134.2M607.5 126.9V131.1M609.5 126.9V131.1M624.5 130.1V134.2M635.5 145.8V149.9M638.5 142.6V146.8M639.5 139.5V143.6M640.5 136.4V140.5M642.5 133.2V137.4M645.5 130.1V134.2M665.5 126.9V131.1M667.5 123.8V127.9M675.5 123.8V127.9M677.5 120.6V124.8M679.5 117.5V121.6M683.5 114.3V118.5M684.5 111.2V115.3M694.5 111.2V115.3M701.5 117.5V121.6M702.5 114.3V118.5M708.5 111.2V115.3M710.5 111.2V115.3M728.5 108.1V112.2M729.5 104.9V109.1M730.5 101.8V105.9M732.5 98.6V102.8M733.5 95.5V99.6M750.5 108.1V112.2M754.5 104.9V109.1M756.5 101.8V105.9M758.5 98.6V102.8M764.5 92.3V99.6M765.5 89.2V93.3M770.5 86V90.2M773.5 79.8V83.9M774.5 76.6V80.8M775.5 73.5V77.6M776.5 70.3V74.5M784.5 79.8V90.2M786.5 82.9V87M787.5 79.8V83.9M794.5 76.6V80.8M803.5 98.6V102.8M804.5 95.5V99.6M808.5 101.8V105.9M809.5 98.6V102.8M812.5 95.5V99.6M813.5 92.3V96.5M815.5 92.3V96.5M816.5 89.2V93.3M817.5 86V90.2M820.5 79.8V90.2M828.5 92.3V96.5M829.5 89.2V93.3M830.5 86V90.2M831.5 82.9V87M832.5 79.8V83.9M838.5 86V90.2M840.5 82.9V87M842.5 79.8V83.9M843.5 70.3V80.8M844.5 64V71.3M852.5 108.1V112.2M854.5 104.9V109.1M856.5 95.5V102.8M858.5 92.3V96.5M862.5 89.2V99.6M863.5 82.9V90.2M865.5 79.8V83.9M866.5 76.6V80.8M867.5 73.5V77.6M868.5 70.3V74.5M869.5 67.2V71.3M870.5 64V68.2M871.5 60.9V65M872.5 57.7V61.9M876.5 54.6V58.7M885.5 76.6V80.8M886.5 70.3V77.6M887.5 64V71.3M891.5 67.2V71.3M897.5 95.5V99.6M899.5 86V90.2M901.5 82.9V87M902.5 79.8V83.9M903.5 70.3V80.8M909.5 104.9V112.2M911.5 101.8V105.9M912.5 98.6V102.8M913.5 95.5V99.6M916.5 92.3V102.8M917.5 82.9V93.3M918.5 76.6V83.9M938.5 98.6V109.1M939.5 95.5V102.8M946.5 101.8V105.9M950.5 104.9V112.2M951.5 101.8V105.9M952.5 98.6V102.8M953.5 95.5V99.6M954.5 92.3V96.5M959.5 117.5V121.6M961.5 114.3V118.5M962.5 111.2V115.3M969.5 133.2V140.5M970.5 123.8V134.2M971.5 120.6V124.8M975.5 114.3V121.6M976.5 111.2V115.3M979.5 111.2V118.5M980.5 104.9V112.2M981.5 101.8V105.9M986.5 114.3V118.5M987.5 111.2V115.3M988.5 104.9V112.2M997.5 98.6V102.8M1007.5 89.2V93.3M1022.5 92.3V96.5M1023.5 89.2V93.3M1030.5 92.3V96.5M1060.5 120.6V124.8M1065.5 108.1V112.2M1094.5 120.6V124.8M1099.5 117.5V121.6M1109.5 117.5V121.6M1134.5 117.5V121.6M1137.5 120.6V124.8M1139.5 123.8V127.9M1144.5 126.9V131.1M1160.5 136.4V140.5M1181.5 123.8V127.9M1182.5 123.8V127.9M1192.5 123.8V127.9M1220.5 126.9V131.1M1222.5 130.1V134.2M1228.5 133.2V137.4M1231.5 133.2V137.4" stroke="#ff0808"/>
<path d="M54.5 215V222.3M74.5 208.7V216M104.5 199.3V206.6M139.5 161.5V178.2M140.5 174.1V181.4M143.5 174.1V190.8M155.5 177.2V184.5M160.5 177.2V184.5M208.5 155.2V162.5M223.5 161.5V178.2M224.5 171V181.4M225.5 174.1V181.4M226.5 174.1V187.7M236.5 167.8V175.1M247.5 167.8V175.1M251.5 180.4V187.7M285.5 161.5V168.8M298.5 158.4V165.7M319.5 155.2V162.5M329.5 167.8V175.1M341.5 158.4V165.7M356.5 167.8V175.1M366.5 167.8V175.1M369.5 171V178.2M514.5 95.5V112.2M516.5 111.2V118.5M544.5 120.6V127.9M634.5 142.7V149.9M648.5 126.9V134.2M736.5 95.5V102.8M738.5 101.8V109.1M779.5 67.2V77.6M796.5 76.6V83.9M797.5 76.6V83.9M799.5 79.8V96.5M800.5 86V99.6M801.5 95.5V105.9M806.5 95.5V105.9M807.5 98.6V105.9M821.5 86V93.3M823.5 89.2V96.5M834.5 76.6V87M845.5 60.9V87M846.5 82.9V99.6M861.5 95.5V102.8M877.5 54.6V68.2M878.5 64V71.3M879.5 60.9V74.5M880.5 70.3V83.9M893.5 57.7V68.2M895.5 67.2V90.2M896.5 82.9V102.8M904.5 64V93.3M905.5 79.8V105.9M906.5 92.3V112.2M929.5 86V93.3M937.5 98.6V105.9M941.5 92.3V102.8M943.5 98.6V105.9M956.5 95.5V115.3M957.5 111.2V118.5M958.5 114.3V121.6M965.5 108.1V124.8M966.5 114.3V134.2M968.5 123.8V140.5M978.5 111.2V118.5M984.5 104.9V121.6M1013.5 89.2V96.5M1029.5 92.3V99.6M1043.5 101.8V109.1M1095.5 111.2V118.5M1112.5 111.2V118.5M1209.5 117.5V124.8" stroke="#0a84ff" stroke-width=".9"/>
<path d="M46.5 218.1V225.4M93.5 208.7V216M119.5 218.1V225.4M124.5 196.1V203.4M125.5 189.8V203.4M131.5 183.5V194M132.5 183.5V194M133.5 174.1V184.5M137.5 171V178.2M153.5 177.2V184.5M158.5 180.4V187.7M175.5 180.4V187.7M203.5 164.7V187.7M204.5 158.4V168.8M211.5 155.2V162.5M227.5 180.4V187.7M243.5 177.2V184.5M245.5 171V178.2M257.5 186.7V194M258.5 183.5V190.8M259.5 177.2V187.7M262.5 171V181.4M267.5 161.5V168.8M278.5 161.5V168.8M293.5 167.8V175.1M294.5 164.7V172M295.5 161.5V168.8M337.5 161.5V168.8M375.5 171V178.2M408.5 148.9V156.2M475.5 130.1V137.4M476.5 130.1V140.5M477.5 123.8V137.4M479.5 117.5V124.8M512.5 92.3V102.8M557.5 111.2V121.6M558.5 111.2V121.6M559.5 101.8V115.3M607.5 126.9V134.2M624.5 130.1V137.4M642.5 130.1V137.4M645.5 126.9V134.2M667.5 120.6V127.9M701.5 117.5V124.8M733.5 95.5V102.8M750.5 108.1V115.3M756.5 98.6V105.9M773.5 76.6V87M775.5 73.5V80.7M786.5 79.8V87M803.5 92.3V102.8M804.5 92.3V102.8M815.5 89.2V96.5M830.5 82.9V90.2M831.5 79.8V93.3M832.5 79.8V87M838.5 86V93.3M840.5 79.8V87M842.5 76.6V83.9M843.5 67.2V80.8M844.5 64V74.5M854.5 101.8V109.1M862.5 89.2V102.8M866.5 73.5V80.8M867.5 73.5V80.7M868.5 67.2V74.5M876.5 51.4V61.9M885.5 73.5V80.8M886.5 70.3V83.9M887.5 64V74.5M891.5 67.2V74.5M897.5 92.3V99.6M901.5 82.9V90.2M902.5 76.6V87M903.5 67.2V87M911.5 98.6V109.1M912.5 92.3V102.8M913.5 92.3V99.6M917.5 79.8V96.5M918.5 73.5V87M953.5 95.5V102.8M959.5 117.5V124.8M961.5 114.3V121.6M969.5 130.1V143.7M970.5 117.5V134.2M975.5 114.3V124.8M976.5 111.2V118.5M979.5 111.2V121.6M981.5 98.6V105.9M986.5 114.3V121.6M987.5 108.1V115.3M988.5 101.8V115.3M1007.5 89.2V96.5M1022.5 92.3V99.6M1109.5 114.3V121.6M1181.5 123.8V131.1M1192.5 120.6V127.9" stroke="#ff0808" stroke-width=".9"/>
<path d="M11.8 451.5h1.3M15.8 451.5h1.3M17.9 449h1.3M18.9 446.5h1.3M27.9 444h1.3M30.9 444h1.3M33.9 444h1.3M36.9 441.4h1.3M38.9 438.9h1.3M39.9 438.9h1.3M44.9 449h1.3M47.9 451.5h1.3M51.9 451.5h1.3M52.9 451.5h1.3M54.9 451.5h1.3M56.9 451.5h1.3M62.9 446.5h1.3M64.8 446.5h1.3M67.8 449h1.3M77.8 446.5h1.3M78.8 444h1.3M80.8 444h1.3M81.8 441.4h1.3M83.8 438.9h1.3M98.8 449h1.3M99.8 449h1.3M100.8 446.5h1.3M102.8 446.5h1.3M103.8 451.5h1.3M108.8 449h1.3M110.8 446.5h1.3M116.8 451.5h1.3M117.8 454.1h1.3M119.8 459.1h1.3M120.8 459.1h1.3M131.8 421.2h1.3M141.8 418.7h1.3M147.8 421.2h1.3M148.8 421.2h1.3M149.8 421.2h1.3M154.8 413.6h1.3M156.8 416.1h1.3M158.8 418.7h1.3M161.8 423.7h1.3M162.8 423.7h1.3M166.8 431.3h1.3M168.8 431.3h1.3M170.8 428.8h1.3M176.8 423.7h1.3M177.8 423.7h1.3M192.8 408.5h1.3M193.8 408.5h1.3M195.8 413.6h1.3M207.8 383.2h1.3M208.8 383.2h1.3M209.8 383.2h1.3M211.8 380.7h1.3M213.8 378.2h1.3M215.8 375.6h1.3M219.8 383.2h1.3M221.8 385.8h1.3M227.8 395.9h1.3M228.8 395.9h1.3M229.8 395.9h1.3M233.8 375.6h1.3M234.8 375.6h1.3M235.8 375.6h1.3M237.8 378.2h1.3M241.8 378.2h1.3M248.8 373.1h1.3M254.8 378.2h1.3M256.9 375.6h1.3M257.9 375.6h1.3M258.9 375.6h1.3M259.9 375.6h1.3M263.9 373.1h1.3M265.9 370.6h1.3M268.9 368.1h1.3M270.9 370.6h1.3M272.9 373.1h1.3M274.9 375.6h1.3M280.9 373.1h1.3M283.9 378.2h1.3M289.9 390.8h1.3M290.9 390.8h1.3M294.9 383.2h1.3M295.9 383.2h1.3M298.9 380.7h1.3M301.9 380.7h1.3M303.9 380.7h1.3M304.9 380.7h1.3M305.9 380.7h1.3M306.9 380.7h1.3M309.9 383.2h1.3M319.9 378.2h1.3M320.9 378.2h1.3M321.9 378.2h1.3M323.9 380.7h1.3M325.9 380.7h1.3M326.9 380.7h1.3M330.9 380.7h1.3M331.9 380.7h1.3M332.9 380.7h1.3M334.9 378.2h1.3M335.9 378.2h1.3M339.9 375.6h1.3M341.9 378.2h1.3M346.9 380.7h1.3M348.9 378.2h1.3M350.9 380.7h1.3M352.9 383.2h1.3M354.9 383.2h1.3M355.9 383.2h1.3M360.9 383.2h1.3M362.9 383.2h1.3M363.9 383.2h1.3M364.9 383.2h1.3M365.9 383.2h1.3M373.9 390.8h1.3M374.9 390.8h1.3M376.9 390.8h1.3M378.9 393.4h1.3M381.9 395.9h1.3M383.9 398.4h1.3M384.9 398.4h1.3M389.9 403.5h1.3M396.9 400.9h1.3M398.9 403.5h1.3M399.9 403.5h1.3M401.9 403.5h1.3M402.9 403.5h1.3M404.9 403.5h1.3M407.9 400.9h1.3M410.9 398.4h1.3M414.9 398.4h1.3M415.9 398.4h1.3M419.9 395.9h1.3M420.9 395.9h1.3M427.9 403.5h1.3M429.9 403.5h1.3M432.9 406h1.3M434.9 408.5h1.3M437.9 411.1h1.3M442.9 418.7h1.3M445.9 413.6h1.3M446.9 413.6h1.3M450.9 416.1h1.3M451.9 416.1h1.3M452.9 416.1h1.3M454.9 418.7h1.3M455.9 418.7h1.3M456.9 418.7h1.3M461.9 416.1h1.3M462.9 416.1h1.3M464.9 416.1h1.3M465.9 416.1h1.3M473.9 395.9h1.3M479.9 380.7h1.3M480.9 380.7h1.3M481.9 380.7h1.3M483.9 383.2h1.3M484.9 383.2h1.3M486.9 385.8h1.3M487.9 385.8h1.3M488.9 385.8h1.3M489.9 385.8h1.3M491.9 385.8h1.3M494.9 385.8h1.3M495.9 385.8h1.3M499.9 390.8h1.3M504.9 380.7h1.3M507.9 378.2h1.3M508.9 378.2h1.3M510.9 378.2h1.3M511.9 378.2h1.3M526.9 383.2h1.3M528.9 385.8h1.3M532.9 393.4h1.3M533.9 393.4h1.3M534.9 393.4h1.3M536.9 390.8h1.3M540.9 383.2h1.3M542.9 385.8h1.3M547.9 378.2h1.3M552.9 370.6h1.3M554.9 368.1h1.3M555.9 368.1h1.3M557.9 365.5h1.3M558.9 365.5h1.3M559.9 365.5h1.3M577.9 342.8h1.3M578.9 342.8h1.3M579.9 342.8h1.3M580.9 342.8h1.3M581.9 342.8h1.3M586.9 357.9h1.3M587.9 357.9h1.3M591.9 365.5h1.3M593.9 368.1h1.3M594.9 368.1h1.3M595.9 368.1h1.3M607.9 370.6h1.3M608.9 370.6h1.3M610.9 373.1h1.3M615.9 363h1.3M617.9 365.5h1.3M618.9 365.5h1.3M621.9 368.1h1.3M623.9 368.1h1.3M625.9 370.6h1.3M627.9 370.6h1.3M628.9 370.6h1.3M629.9 370.6h1.3M630.9 370.6h1.3M633.9 368.1h1.3M635.9 365.5h1.3M637.9 363h1.3M642.9 355.4h1.3M644.9 355.4h1.3M645.9 355.4h1.3M646.9 355.4h1.3M647.9 355.4h1.3M648.9 355.4h1.3M649.9 355.4h1.3M650.9 355.4h1.3M651.9 355.4h1.3M652.9 355.4h1.3M653.9 355.4h1.3M654.9 355.4h1.3M655.9 355.4h1.3M656.9 355.4h1.3M657.9 355.4h1.3M658.9 355.4h1.3M660.9 352.9h1.3M669.9 345.3h1.3M671.9 345.3h1.3M672.9 345.3h1.3M678.9 340.2h1.3M679.9 340.2h1.3M680.9 340.2h1.3M681.9 340.2h1.3M683.9 340.2h1.3M685.9 342.8h1.3M687.9 340.2h1.3M688.9 340.2h1.3M689.9 340.2h1.3M691.9 342.8h1.3M695.9 350.4h1.3M697.9 350.4h1.3M698.9 350.4h1.3M702.9 340.2h1.3M708.9 345.3h1.3M710.9 342.8h1.3M711.9 342.8h1.3M712.9 342.8h1.3M720.9 340.2h1.3M738.9 312.4h1.3M739.9 312.4h1.3M745.9 307.3h1.3M746.9 307.3h1.3M762.9 284.6h1.3M768.9 307.3h1.3M779.9 289.6h1.3M780.9 289.6h1.3M781.9 289.6h1.3M785.9 289.6h1.3M786.9 289.6h1.3M802.9 320h1.3M804.9 320h1.3M806.9 320h1.3M813.9 294.7h1.3M815.9 292.2h1.3M829.9 289.6h1.3M860.9 325.1h1.3M861.9 325.1h1.3M862.9 325.1h1.3M863.9 325.1h1.3M864.9 325.1h1.3M875.9 297.2h1.3M886.9 302.3h1.3M901.9 309.9h1.3M916.9 332.6h1.3M926.9 307.3h1.3M931.9 294.7h1.3M932.9 294.7h1.3M935.9 299.8h1.3M937.9 297.2h1.3M939.9 294.7h1.3M981.9 327.6h1.3M985.9 327.6h1.3M987.9 330.1h1.3M992.9 340.2h1.3M993.9 340.2h1.3M1003.9 317.5h1.3M1011.9 309.9h1.3M1022.9 320h1.3M1023.9 320h1.3M1024.8 320h1.3M1026.8 320h1.3M1027.8 320h1.3M1032.8 322.5h1.3M1040.8 340.2h1.3M1044.8 345.3h1.3M1047.8 350.4h1.3M1052.8 352.9h1.3M1055.8 355.4h1.3M1056.8 355.4h1.3M1058.8 357.9h1.3M1059.8 360.5h1.3M1063.8 347.8h1.3M1064.8 345.3h1.3M1077.8 355.4h1.3M1078.8 355.4h1.3M1083.8 360.5h1.3M1085.8 363h1.3M1089.8 368.1h1.3M1092.8 365.5h1.3M1096.8 360.5h1.3M1097.8 363h1.3M1100.8 363h1.3M1102.8 363h1.3M1105.8 363h1.3M1108.8 365.5h1.3M1112.8 363h1.3M1118.8 368.1h1.3M1120.8 375.6h1.3M1122.8 378.2h1.3M1130.8 398.4h1.3M1140.8 431.3h1.3M1145.8 438.9h1.3M1150.8 433.8h1.3M1151.8 428.8h1.3M1154.8 431.3h1.3M1155.8 436.4h1.3M1156.8 438.9h1.3M1158.8 446.5h1.3M1163.8 444h1.3M1166.8 431.3h1.3M1169.8 431.3h1.3M1170.8 431.3h1.3M1171.8 436.4h1.3M1172.8 436.4h1.3M1175.8 441.4h1.3M1178.8 444h1.3M1179.8 444h1.3M1182.8 441.4h1.3M1183.8 441.4h1.3M1188.8 449h1.3M1200.8 411.1h1.3M1202.8 411.1h1.3M1203.8 413.6h1.3M1208.8 423.7h1.3M1209.8 423.7h1.3M1213.8 423.7h1.3M1215.8 428.8h1.3M1218.8 438.9h1.3M1223.8 446.5h1.3M1225.8 451.5h1.3M1226.8 454.1h1.3M1227.8 454.1h1.3" stroke="#f4ec70" stroke-width="1.5"/>
<path d="M18.5 448.5V452M37.5 438.4V441.9M55.5 451V454.6M79.5 440.9V444.5M109.5 446V449.5M118.5 451.1V454.6M131.5 418.2V424.2M132.5 418.2V421.7M146.5 418.2V424.2M177.5 420.7V424.2M182.5 428.3V434.3M202.5 387.8V393.9M220.5 382.7V386.3M228.5 392.9V396.4M230.5 392.9V396.4M240.5 377.7V383.7M243.5 375.1V381.2M258.5 372.6V376.1M275.5 375.1V378.7M290.5 387.8V391.3M297.5 377.7V383.7M306.5 380.2V383.7M308.5 380.2V386.3M316.5 380.2V386.3M318.5 375.1V381.2M327.5 377.7V381.2M364.5 382.7V386.3M366.5 382.7V386.3M372.5 392.9V398.9M375.5 387.8V391.3M384.5 395.4V398.9M397.5 400.4V404M403.5 400.5V404M408.5 400.4V404M420.5 395.4V398.9M421.5 392.9V396.4M422.5 390.3V396.4M431.5 403V409M436.5 408V414.1M438.5 408V411.6M453.5 415.6V419.2M459.5 415.6V421.7M463.5 413.1V416.6M474.5 395.4V398.9M481.5 377.7V381.2M490.5 385.3V388.8M492.5 382.7V386.3M496.5 382.7V386.3M509.5 375.2V378.7M511.5 375.2V378.7M527.5 380.2V383.7M534.5 392.9V396.4M537.5 390.3V393.9M547.5 375.2V381.2M548.5 375.2V378.7M549.5 375.1V381.2M553.5 367.6V371.1M555.5 365V368.6M574.5 344.8V350.9M608.5 370.1V373.6M614.5 362.5V368.6M630.5 370.1V373.6M649.5 352.4V355.9M651.5 354.9V358.4M658.5 352.4V355.9M659.5 352.4V355.9M666.5 344.8V350.8M676.5 339.7V345.8M686.5 339.7V343.3M698.5 349.9V353.4M699.5 349.9V353.4M701.5 339.7V345.8M750.5 306.8V312.9M780.5 286.6V290.1M816.5 289.1V292.7M838.5 291.7V297.7M861.5 324.6V328.1M864.5 324.6V328.1M887.5 299.2V302.8M893.5 299.2V305.3M896.5 324.6V330.6M898.5 327.1V333.1M917.5 329.6V333.1M919.5 332.1V338.2M932.5 294.2V297.7M933.5 294.2V297.7M936.5 299.2V302.8M949.5 291.7V297.7M991.5 332.1V338.2M993.5 337.2V340.7M1002.5 322V328.1M1004.5 317V320.5M1033.5 322V325.5M1093.5 365V368.6M1123.5 377.7V381.2M1125.5 382.7V388.8M1134.5 400.5V406.5M1141.5 430.8V434.3M1143.5 430.8V436.9M1146.5 438.4V441.9M1152.5 428.3V431.8M1172.5 433.3V436.9M1173.5 435.9V439.4M1180.5 443.5V447M1209.5 420.7V424.2M1227.5 451.1V454.6" stroke="#f4ec70"/>
<path d="M71.5 440.9V444.5M102.5 443.5V447M128.5 415.6V424.2M138.5 395.4V398.9M139.5 397.9V411.6M141.5 413.1V419.2M144.5 418.2V421.7M147.5 418.2V421.7M154.5 410.6V414.1M156.5 413.1V416.6M158.5 415.6V419.2M160.5 418.2V421.7M161.5 420.7V424.2M165.5 425.8V429.3M166.5 428.3V431.8M175.5 418.2V421.7M176.5 420.7V424.2M179.5 423.2V426.8M183.5 430.8V434.3M191.5 408V411.6M195.5 408V414.1M203.5 390.3V398.9M217.5 375.1V381.2M219.5 380.2V383.7M223.5 385.3V388.8M224.5 387.8V391.3M226.5 392.9V398.9M237.5 375.1V378.7M239.5 377.7V381.2M248.5 370.1V373.6M250.5 372.6V376.1M272.5 370.1V373.6M274.5 372.6V376.1M282.5 372.6V376.1M283.5 375.1V378.7M285.5 377.7V383.7M286.5 382.7V386.3M287.5 385.3V393.9M309.5 380.2V383.7M311.5 382.7V386.3M314.5 382.7V386.3M319.5 375.1V378.7M329.5 380.2V383.7M338.5 375.1V378.7M341.5 375.1V378.7M343.5 377.7V381.2M344.5 380.2V383.7M352.5 380.2V383.7M357.5 382.7V386.3M367.5 382.7V386.3M368.5 385.3V388.8M369.5 387.8V391.3M370.5 390.3V393.9M378.5 390.3V393.9M380.5 392.9V396.4M383.5 395.4V398.9M386.5 397.9V401.4M391.5 403V406.5M414.5 395.4V398.9M418.5 395.4V398.9M425.5 403V406.5M432.5 403V406.5M434.5 405.5V409M437.5 408V411.6M440.5 413.1V416.6M442.5 415.6V419.2M449.5 410.6V414.1M450.5 413.1V416.6M454.5 415.6V419.2M486.5 382.7V386.3M498.5 385.3V388.8M499.5 387.8V391.3M513.5 377.7V381.2M515.5 377.7V383.7M516.5 382.7V386.3M517.5 385.3V391.3M525.5 377.7V381.2M526.5 380.2V383.7M528.5 382.7V386.3M530.5 385.3V388.8M531.5 387.8V391.3M542.5 382.7V386.3M566.5 342.3V345.8M567.5 344.8V348.3M571.5 357.4V361M583.5 342.3V350.9M585.5 349.9V355.9M586.5 354.9V358.4M589.5 357.4V361M591.5 360V366M593.5 365V368.6M599.5 365V368.6M600.5 367.6V371.1M601.5 370.1V373.6M603.5 375.1V378.7M610.5 370.1V373.6M621.5 365V368.6M625.5 367.6V371.1M691.5 339.7V343.3M693.5 342.3V348.3M704.5 339.7V343.3M707.5 344.8V348.3M716.5 339.7V343.3M725.5 339.7V343.3M726.5 342.3V348.3M732.5 301.8V310.4M736.5 296.7V302.8M737.5 301.8V305.3M738.5 304.3V312.9M741.5 311.9V315.4M745.5 304.3V312.9M754.5 279V287.6M755.5 286.6V290.1M756.5 284.1V292.7M759.5 268.9V277.5M762.5 279V285.1M766.5 294.2V297.7M767.5 296.7V302.8M768.5 301.8V307.8M770.5 306.8V312.9M779.5 281.5V290.1M783.5 289.1V292.7M788.5 289.1V295.2M789.5 294.2V297.7M790.5 296.7V300.2M792.5 301.8V307.8M794.5 304.3V307.8M800.5 301.8V310.4M801.5 309.4V315.4M821.5 284.1V295.2M822.5 294.2V307.8M823.5 299.3V310.4M833.5 284.1V290.1M834.5 289.1V295.2M835.5 294.2V297.7M842.5 289.1V297.7M843.5 296.7V300.2M846.5 317V325.6M847.5 324.6V328.1M848.5 327.1V330.6M849.5 329.6V338.2M850.5 337.2V345.8M852.5 362.5V368.6M873.5 276.5V295.2M874.5 294.2V302.8M878.5 294.2V300.2M879.5 299.2V302.8M881.5 309.4V315.4M883.5 317V320.5M888.5 301.8V305.3M890.5 306.8V310.4M895.5 317V325.6M905.5 322V343.3M914.5 324.6V328.1M918.5 332.1V335.7M928.5 306.8V310.4M934.5 294.2V297.7M941.5 294.2V297.7M942.5 296.7V302.8M948.5 291.7V295.2M950.5 294.2V300.2M951.5 299.2V302.8M952.5 301.8V307.8M954.5 304.3V315.4M955.5 314.4V320.5M956.5 319.5V340.7M957.5 339.7V350.9M964.5 329.6V335.7M965.5 334.7V343.3M967.5 352.4V371.1M973.5 344.8V361M977.5 344.8V350.9M987.5 327.1V330.6M990.5 334.7V338.2M992.5 337.2V340.7M1010.5 309.4V312.9M1013.5 309.4V312.9M1015.5 309.4V320.5M1016.5 319.5V328.1M1032.5 319.5V323M1034.5 322V325.6M1035.5 324.6V328.1M1036.5 327.1V330.6M1037.5 329.6V333.1M1038.5 332.1V335.7M1039.5 334.7V338.2M1092.5 362.5V366M1111.5 360V363.5M1120.5 367.6V376.1M1126.5 382.7V386.3M1127.5 385.3V391.3M1128.5 390.3V393.9M1129.5 392.9V396.4M1130.5 395.4V398.9M1132.5 397.9V401.4M1133.5 400.4V404M1135.5 403V409M1137.5 408V414.1M1138.5 413.1V421.7M1142.5 430.8V434.3M1144.5 433.3V436.9M1145.5 435.9V439.4M1147.5 438.4V444.5M1160.5 446V449.5M1177.5 438.4V441.9M1187.5 440.9V444.5M1188.5 443.5V447M1199.5 413.1V416.6M1202.5 408V411.6M1207.5 418.2V421.7M1208.5 420.7V424.2M1211.5 420.7V424.2M1223.5 440.9V444.5" stroke="#0a84ff"/>
<path d="M15.5 451V454.6M21.5 446V449.5M22.5 443.5V447M30.5 443.5V447M44.5 440.9V444.5M114.5 446V449.5M124.5 443.5V462.2M125.5 430.8V444.5M126.5 428.3V431.8M127.5 420.7V429.3M129.5 415.6V421.7M133.5 408V421.7M135.5 400.4V404M145.5 418.2V421.7M153.5 410.6V414.1M170.5 428.3V431.8M172.5 425.8V429.3M173.5 420.7V426.8M174.5 418.2V421.7M184.5 428.3V434.3M187.5 420.7V424.2M188.5 418.2V421.7M190.5 408V414.1M197.5 410.6V414.1M198.5 408V411.6M199.5 405.5V409M200.5 397.9V406.5M201.5 390.3V398.9M204.5 392.9V398.9M205.5 390.3V393.9M206.5 385.3V391.3M207.5 382.7V386.3M211.5 380.2V383.7M213.5 377.7V381.2M215.5 375.1V378.7M227.5 395.4V398.9M231.5 387.8V396.4M232.5 385.3V388.8M241.5 377.7V381.2M244.5 375.1V378.7M246.5 372.6V376.1M247.5 370.1V373.6M254.5 377.7V381.2M256.5 375.1V378.7M265.5 370.1V373.6M267.5 367.6V371.1M278.5 375.1V378.7M280.5 372.6V376.1M288.5 390.3V393.9M292.5 387.8V391.3M293.5 385.3V388.8M294.5 382.7V386.3M313.5 382.7V386.3M315.5 382.7V386.3M330.5 380.2V383.7M334.5 377.7V381.2M337.5 375.1V378.7M339.5 375.1V378.7M346.5 380.2V383.7M348.5 377.7V381.2M358.5 382.7V386.3M394.5 403V409M395.5 400.4V409M396.5 400.4V404M409.5 397.9V401.4M412.5 395.4V398.9M419.5 395.4V398.9M444.5 415.6V419.2M445.5 413.1V416.6M448.5 410.6V414.1M460.5 415.6V419.2M467.5 413.1V416.6M468.5 410.6V414.1M470.5 405.5V409M471.5 400.4V406.5M472.5 397.9V401.4M473.5 395.4V398.9M475.5 390.3V396.4M476.5 387.8V391.3M477.5 385.3V388.8M479.5 380.2V383.7M493.5 382.7V386.3M501.5 387.8V391.3M503.5 382.7V386.3M504.5 380.2V383.7M521.5 382.7V388.8M522.5 380.2V383.7M538.5 387.8V391.3M539.5 382.7V388.8M544.5 382.7V386.3M545.5 380.2V383.7M546.5 377.7V381.2M550.5 375.1V378.7M551.5 372.6V376.1M554.5 367.6V371.1M557.5 365V368.6M561.5 360V366M562.5 354.9V361M563.5 344.8V355.9M564.5 342.3V345.8M572.5 352.4V361M573.5 347.3V353.4M575.5 342.3V348.3M576.5 339.7V343.3M598.5 365V368.6M604.5 370.1V378.7M606.5 365V373.6M612.5 370.1V373.6M613.5 365V371.1M615.5 362.5V366M633.5 367.6V371.1M635.5 365V368.6M637.5 362.5V366M639.5 360V363.5M641.5 357.4V361M642.5 354.9V358.4M660.5 352.4V355.9M662.5 349.9V353.4M665.5 347.3V350.9M674.5 342.3V345.8M687.5 339.7V343.3M700.5 344.8V350.9M702.5 339.7V345.8M708.5 344.8V348.3M710.5 342.3V345.8M715.5 339.7V343.3M727.5 337.2V348.3M729.5 317V338.2M730.5 304.3V318M731.5 301.8V305.3M733.5 301.8V310.4M734.5 299.2V302.8M735.5 296.7V300.2M742.5 311.9V315.4M743.5 309.4V312.9M744.5 306.8V310.4M749.5 306.8V310.4M753.5 279V287.6M758.5 268.9V274.9M771.5 304.3V312.9M772.5 296.7V305.3M773.5 291.7V297.7M774.5 286.6V292.7M775.5 284.1V287.6M776.5 281.5V285.1M777.5 279V282.5M793.5 304.3V307.8M795.5 299.2V307.8M796.5 296.7V300.2M809.5 311.9V315.4M811.5 301.8V307.8M812.5 294.2V302.8M815.5 291.7V295.2M817.5 289.1V292.7M818.5 286.6V290.1M819.5 284.1V287.6M825.5 306.8V310.4M826.5 299.2V307.8M827.5 296.7V300.2M829.5 289.1V292.7M832.5 284.1V287.6M837.5 294.2V297.7M840.5 291.7V295.2M841.5 289.1V292.7M853.5 360V368.6M854.5 352.4V361M855.5 344.8V353.4M856.5 342.3V345.8M857.5 337.2V343.3M859.5 327.1V333.1M860.5 324.6V328.1M866.5 322V325.6M867.5 319.5V323M868.5 317V320.5M869.5 311.9V318M870.5 304.3V312.9M871.5 301.8V305.3M872.5 276.5V302.8M875.5 296.7V302.8M877.5 294.2V297.7M884.5 314.4V320.5M885.5 306.8V315.4M886.5 301.8V307.8M891.5 304.3V310.4M892.5 301.8V305.3M901.5 309.4V315.4M903.5 304.3V310.4M908.5 349.9V355.9M909.5 344.8V350.9M911.5 324.6V335.7M912.5 319.5V325.6M920.5 332.1V335.7M922.5 324.6V330.6M923.5 314.4V325.6M924.5 309.4V315.4M925.5 304.3V310.4M929.5 304.3V310.4M930.5 301.8V305.3M931.5 294.2V302.8M937.5 296.7V300.2M939.5 294.2V297.7M943.5 299.2V302.8M944.5 294.2V300.2M945.5 291.7V295.2M946.5 286.6V292.7M959.5 324.6V338.2M960.5 319.5V325.6M963.5 324.6V335.7M968.5 354.9V371.1M969.5 347.3V355.9M970.5 332.1V348.3M974.5 354.9V361M975.5 349.9V355.9M976.5 344.8V350.9M978.5 347.3V355.9M979.5 337.2V350.9M980.5 329.6V338.2M981.5 327.1V330.6M983.5 319.5V328.1M984.5 324.6V328.1M995.5 337.2V340.7M997.5 334.7V338.2M998.5 332.1V335.7M1000.5 327.1V330.6M1001.5 322V328.1M1003.5 317V323M1005.5 314.4V318M1008.5 311.9V315.4M1011.5 309.4V312.9M1014.5 309.4V312.9M1018.5 327.1V335.7M1022.5 319.5V323M1031.5 319.5V323M1067.5 344.8V348.3M1070.5 342.3V345.8M1110.5 362.5V366M1114.5 362.5V366M1118.5 367.6V371.1M1136.5 403V411.6M1153.5 428.3V431.8M1181.5 443.5V447M1195.5 425.8V429.3M1225.5 448.5V452M1230.5 458.6V462.2" stroke="#ff0808"/>
<path d="M138.5 395.4V401.4M139.5 395.4V414.1M141.5 410.6V419.2M144.5 418.2V424.2M154.5 408V414.1M158.5 413.1V419.2M183.5 428.3V434.3M224.5 387.8V393.9M226.5 390.3V401.4M239.5 375.2V381.2M248.5 370.1V376.1M282.5 370.1V376.1M285.5 377.7V386.3M286.5 382.7V393.9M287.5 382.7V393.9M309.5 380.2V386.3M319.5 372.6V381.2M341.5 372.6V378.7M367.5 380.2V386.3M368.5 385.3V391.3M369.5 385.3V391.3M391.5 403V409M440.5 413.1V419.2M449.5 410.6V416.6M454.5 415.6V421.7M486.5 382.7V388.8M498.5 385.3V391.3M513.5 375.2V381.2M516.5 380.2V388.8M517.5 382.7V391.3M526.5 380.2V386.3M528.5 382.7V388.8M530.5 385.3V391.3M531.5 385.3V393.9M542.5 382.7V388.8M566.5 339.7V345.8M571.5 352.4V361M583.5 339.7V353.4M591.5 357.4V366M601.5 370.1V376.1M691.5 339.7V345.8M693.5 339.7V348.3M704.5 337.2V348.3M707.5 342.3V348.3M736.5 294.2V302.8M737.5 301.8V307.8M755.5 284.1V290.1M759.5 268.9V280M766.5 291.7V302.8M768.5 301.8V312.9M770.5 304.3V312.9M783.5 286.6V292.7M789.5 291.7V297.7M790.5 294.2V302.8M792.5 299.3V310.4M794.5 301.8V310.4M800.5 299.2V312.9M801.5 306.8V315.4M821.5 281.5V297.7M822.5 291.7V307.8M833.5 281.5V292.7M834.5 286.6V300.2M835.5 291.7V300.2M842.5 286.6V300.2M843.5 294.2V305.3M846.5 311.9V328.1M847.5 319.5V328.1M848.5 322V333.1M849.5 327.1V340.7M850.5 332.1V348.3M852.5 357.4V371.1M874.5 291.7V302.8M878.5 294.2V302.8M879.5 296.7V305.3M888.5 299.3V307.8M890.5 304.3V310.4M895.5 317V330.6M914.5 319.5V328.1M918.5 332.1V338.2M934.5 291.7V297.7M941.5 291.7V300.2M948.5 289.1V295.2M950.5 294.2V302.8M951.5 296.7V302.8M952.5 301.8V310.4M954.5 301.8V315.4M955.5 311.9V323M956.5 317V343.3M957.5 339.7V358.4M964.5 329.6V338.2M965.5 332.1V343.3M967.5 352.4V373.6M973.5 339.7V363.5M977.5 344.8V353.4M987.5 327.1V333.1M990.5 332.1V338.2M1016.5 311.9V330.6M1034.5 319.5V325.6M1035.5 324.6V330.6M1036.5 324.6V333.1M1038.5 329.6V335.7M1039.5 334.7V340.7M1126.5 382.7V388.8M1128.5 390.3V396.4M1129.5 390.3V396.4M1133.5 400.4V406.5M1137.5 408V416.6M1147.5 438.4V447M1207.5 415.6V421.7M1208.5 420.7V426.8" stroke="#0a84ff" stroke-width=".9"/>
<path d="M15.5 448.5V454.6M21.5 446V452M44.5 440.9V447M114.5 443.5V449.5M124.5 443.5V464.7M126.5 428.3V434.3M129.5 415.6V426.7M135.5 400.4V406.5M153.5 410.6V416.6M170.5 428.3V434.3M172.5 423.2V429.3M173.5 418.2V426.8M188.5 413.1V424.2M197.5 408V416.6M198.5 405.5V414.1M199.5 403V414.1M201.5 387.8V401.4M204.5 392.9V401.4M206.5 382.7V393.9M215.5 375.1V381.2M227.5 392.9V398.9M231.5 387.8V398.9M232.5 382.7V393.9M247.5 370.1V376.1M256.5 375.1V381.2M267.5 367.6V373.6M292.5 387.8V393.9M293.5 385.3V391.3M294.5 380.2V391.3M315.5 380.2V386.3M337.5 375.1V381.2M394.5 403V411.6M396.5 395.4V404M409.5 395.4V401.4M419.5 395.4V401.4M444.5 413.1V419.2M445.5 413.1V419.2M448.5 410.6V416.6M460.5 415.6V421.7M468.5 410.6V416.6M470.5 403V411.6M472.5 395.4V404M473.5 392.9V401.4M475.5 387.8V398.9M476.5 387.8V396.4M503.5 382.7V388.8M522.5 380.2V388.8M551.5 372.6V378.7M561.5 360V368.6M562.5 349.9V363.5M563.5 342.3V355.9M564.5 339.7V348.3M572.5 347.3V363.5M573.5 344.8V353.4M576.5 339.7V345.8M604.5 370.1V381.2M613.5 365V373.6M639.5 360V366M702.5 337.2V345.8M727.5 337.2V350.8M729.5 314.4V343.3M730.5 299.3V320.5M734.5 296.7V305.3M735.5 294.2V300.2M743.5 309.4V320.5M744.5 306.8V312.9M749.5 304.3V312.9M753.5 279V292.7M758.5 268.9V280M771.5 304.3V315.4M772.5 289.1V305.3M773.5 289.1V300.2M774.5 286.6V295.2M775.5 281.5V287.6M777.5 279V285.1M795.5 294.2V307.8M796.5 294.2V302.8M811.5 299.3V312.9M815.5 289.1V297.7M825.5 304.3V315.4M826.5 299.2V310.4M827.5 294.2V302.8M840.5 289.1V295.2M841.5 286.6V292.7M853.5 357.4V368.6M855.5 344.8V355.9M856.5 337.2V345.8M857.5 334.7V345.8M859.5 327.1V335.7M860.5 324.6V330.6M866.5 322V328.1M867.5 317V323M868.5 314.4V320.5M869.5 311.9V320.5M870.5 304.3V315.4M871.5 296.7V310.4M875.5 294.2V305.3M884.5 311.9V323M885.5 304.3V315.4M886.5 299.3V312.9M891.5 301.8V310.4M892.5 296.7V305.3M903.5 304.3V312.9M909.5 344.8V353.4M912.5 314.4V325.6M920.5 332.1V340.7M922.5 322V330.6M924.5 309.4V318M930.5 296.7V305.3M943.5 296.7V302.8M944.5 294.2V302.8M946.5 286.6V295.2M959.5 324.6V343.3M960.5 317V325.6M968.5 354.9V376.1M969.5 342.3V358.4M970.5 329.6V350.8M974.5 354.9V363.5M975.5 347.3V355.9M976.5 339.7V353.4M979.5 334.7V355.9M980.5 329.6V340.7M981.5 327.1V335.7M984.5 322V328.1M997.5 332.1V340.7M1001.5 322V330.6M1003.5 317V325.5M1011.5 309.4V315.4M1014.5 304.3V315.4M1018.5 324.6V338.2M1022.5 319.5V325.5M1070.5 339.7V345.8M1114.5 360V366M1225.5 446V452" stroke="#ff0808" stroke-width=".9"/>
</g>
<polyline points="8.5,583.7 9.4,583.4 10.3,583.8 11.3,582.6 12.2,581.2 13.1,578.8 14.1,579.3 15.1,579.8 16,581.2 16.9,577.4 17.9,571.8 18.8,571.6 19.8,568.4 20.7,569 21.6,567.7 22.6,569.6 23.5,569.9 24.4,574 25.4,578.4 26.3,576.5 27.3,576.2 28.2,575.8 29.2,575.6 30.1,577.7 31.1,577 32,580 33,581.2 33.9,581.2 34.9,580.1 35.8,581.9 36.8,579.1 37.7,580.3 38.6,579.9 39.6,578.9 40.5,579.7 41.5,579.6 42.4,580.3 43.3,582.1 44.2,583.3 45.2,582.5 46.1,584 47.1,585 48,588.7 49,588.7 49.9,585.7 50.9,584.8 51.8,583 52.8,584.1 53.7,585 54.6,584.1 55.6,586 56.5,584.9 57.5,583.8 58.4,585.4 59.3,584 60.2,588.1 61.2,590.6 62.1,589.4 63,586 64,588.9 64.9,590.6 65.9,595.3 66.9,594.1 67.8,588.8 68.8,586.6 69.7,585 70.6,582.5 71.6,582.7 72.5,582.8 73.4,581.2 74.3,587.4 75.3,590.6 76.3,586.7 77.2,581.1 78.2,578.4 79.1,579.7 80.1,577 81,577.4 81.9,577.4 82.8,579.7 83.8,578.1 84.7,578.4 85.7,582.7 86.6,584.9 87.6,587.8 88.5,588.7 89.5,590.6 90.4,590.6 91.4,588.2 92.3,587 93.2,587.8 94.2,585 95.1,584.4 96.1,582.7 97,582.6 98,582.1 98.9,580.3 99.8,580.3 100.8,578.9 101.7,578.5 102.6,577.4 103.3,579.3 104,583 104.8,577.8 105.5,572.7 106.4,573.8 107.3,573.7 108.3,570.4 109.2,571.8 110.1,573.8 111.1,576.7 112,580.3 113,581.3 113.9,582.8 114.9,585 115.8,582.4 116.8,581.1 117.7,579.3 118.6,581.6 119.6,586.3 120.5,588.7 121.5,566.8 122.4,548.2 123.3,549.8 124.3,548.2 125.2,574.6 125.9,578.2 126.6,584 127.3,589.3 128.1,592.6 128.8,597.3 129.6,600 130.3,595.7 131.1,591.3 131.8,587.8 132.8,591.6 133.7,593.7 134.7,598.2 135.6,597.3 136.6,597.1 137.5,596.3 138.4,592.9 139.3,593.1 140.3,589.8 141.2,587.8 142.2,587.7 143.1,588 144.1,588.6 145,585.8 146,586.9 146.9,589.1 147.8,593.4 148.8,589 149.7,588.7 150.7,584 151.6,586.6 152.6,590.4 153.5,591.3 154.4,595.3 155.4,594 156.3,588.4 157.3,586.9 158.1,589.7 158.9,589.6 159.7,593.4 160.5,591.8 161.2,587.4 162,585 162.9,582.9 163.9,580.3 164.8,577.4 165.7,577.5 166.7,579.5 167.6,579.2 168.5,582 169.5,582.4 170.4,580.7 171.4,580.3 172.3,580.7 173.2,582.2 174.2,583.4 175.1,583.7 176,586 176.9,583.4 177.9,582.3 178.9,579.8 179.8,577.4 180.8,578.1 181.7,576.4 182.7,575.7 183.6,573.7 184.5,574.7 185.5,578.2 186.4,580.3 187.4,580.3 188.3,581.2 189.3,583 190.2,585.9 191.1,590.2 192,593.4 193,591.5 193.9,589.9 194.9,588.7 195.7,585.4 196.4,584.8 197.2,580.3 198,582.5 198.8,586.7 199.6,587.8 200.5,594.5 201.5,598.3 202.4,602.9 203.4,601.2 204.3,596.3 205.3,599.6 206.2,600.5 207.2,601 208.1,603.1 209.1,602.7 210,603.9 211,604.8 211.9,607.6 212.8,605.1 213.8,604.6 214.7,602.9 215.6,604.3 216.6,606.9 217.5,607.6 218.2,604.7 218.9,603.5 219.6,600.9 220.4,602.6 221.3,604.3 222.2,608.4 223,609.6 223.9,608.3 224.8,608.5 225.7,607.8 226.5,608.1 227.3,610.5 228.2,610 229,612.2 229.9,607.5 230.8,606.2 231.7,602.6 232.6,606 233.4,610 234.3,613 235.2,612.2 236.1,615.1 237,614.8 237.9,615.9 238.7,621.6 239.6,622.6 240.5,623.5 241.3,622.5 242.2,620.9 243.1,619.1 243.9,619.1 244.8,617.4 245.7,622.1 246.6,624.2 247.4,627.1 248.3,629.6 249.2,626.6 250,625.2 250.9,625.8 251.7,623.9 252.6,622.6 253.4,626.1 254.3,629.6 255.2,630.3 256.1,632.4 257,634.8 257.9,634.1 258.7,630.3 259.6,628.7 260.5,628.9 261.3,624.8 262.2,624.6 263,623.6 263.9,621.7 264.8,622.5 265.6,623 266.4,623 267.3,623.4 268.1,621 269,622.6 269.9,623.8 270.9,627.8 271.8,623.4 272.6,620.4 273.5,618.3 274.4,618.6 275.2,617.5 276.1,617.7 277,616.5 277.8,612.2 278.7,614.3 279.5,615.9 280.4,617.4 281.3,613.7 282.2,612.2 283.1,613.1 283.9,612.4 284.8,612 285.6,612.2 286.5,610.4 287.3,608 288.2,606.1 289,604.3 289.9,604.6 290.8,604.6 291.7,605.6 292.6,606 293.5,609.9 294.3,613 295.1,608.1 296,602.6 296.9,603 297.8,606.3 298.7,607 299.6,605.7 300.4,606.2 301.3,607 302.2,608.6 303.1,606.7 303.9,608.8 304.8,607.8 305.7,606.3 306.5,605 307.4,602.6 308.3,602.4 309.1,605.2 310,604.7 310.8,603.3 311.7,605.2 312.6,603.3 313.4,599.3 314.3,596.5 315.2,597.6 316.1,597.2 317,596.5 317.9,605.5 318.7,611.3 319.6,611.3 320.4,609 321.3,607 322.1,610.5 323,612.2 324,611.6 324.9,615 325.9,615.6 326.9,615.7 327.7,616.1 328.4,614.4 329.2,612.8 330,611.3 330.9,611.8 331.8,610.8 332.6,610 333.5,609.6 334.3,613 335.2,612.9 336.1,609.5 337,607.8 337.9,607.6 338.7,608.6 339.6,611.3 340.5,610 341.3,609.4 342.2,608.8 343.1,606.3 343.9,607.1 344.8,606 345.7,609.3 346.6,610.4 347.4,611.9 348.3,613 349.3,611.1 350.2,610.3 351.2,607 352,607 352.7,610.8 353.5,611.3 354.4,611.3 355.2,609.5 356.1,609.2 356.9,607.3 357.8,607.8 358.5,607.9 359.3,610.7 360,613 361,610.7 361.9,609.6 362.9,607.2 363.9,606 364.8,609.7 365.6,609.5 366.5,613 367.3,612.7 368.2,610.3 369,608.7 369.9,605.7 370.8,605.9 371.7,602.6 372.6,604.8 373.4,605.3 374.3,608.7 375.2,608.2 376.1,604.4 376.9,603.7 377.8,601.7 378.7,601 379.6,599.9 380.4,598.5 381.3,596.5 382.2,596.2 383,594.6 383.9,592.2 384.8,593.4 385.6,596.9 386.5,599 387.4,596.8 388.2,593.5 389.1,592.3 390,590.4 390.9,589.3 391.7,586.1 392.6,584.3 393.5,584.3 394.4,584.9 395.2,585.5 396.1,586.6 397,586 397.9,587.2 398.7,585.3 399.5,585.2 400.4,586 401.3,581.5 402.2,578.3 403.1,581 403.9,582.5 404.8,582.6 405.7,581.6 406.6,582.9 407.4,581.5 408.3,580.9 409,580.4 409.6,577.1 410.3,574.8 411.1,579.9 411.8,582.5 412.6,586 413.4,584.2 414.1,584.6 414.9,581.6 415.6,580.9 416.4,582.7 417.1,582.7 417.9,582.9 418.7,584.3 419.7,585.7 420.6,588.7 421.6,588.2 422.6,590.4 423.5,585.1 424.3,584 425.1,577.4 426,574.8 426.9,576.2 427.8,579.3 428.7,581.7 429.6,579.5 430.4,577 431.3,572.2 432.2,570.3 433.1,569.5 433.9,571.3 434.8,568.7 435.7,567.6 436.6,567.3 437.4,564.3 438.3,563.5 439.2,564.5 440,568.2 440.9,568.7 441.6,565.4 442.3,563.2 443,561.7 443.6,563 444.3,565.2 445,562.6 445.7,559.9 446.4,559 447.2,560 448,561.4 448.8,564.4 449.6,566 450.5,565.5 451.3,563.8 452.2,562.6 453.1,562 453.9,564.6 454.8,565.9 455.7,566 456.4,562.6 457.2,561.3 457.9,559 458.6,562.4 459.3,563.6 460,564.3 460.9,562.6 461.7,560.4 462.6,558.5 463.4,556.5 464.3,556.5 465.2,555.6 466.1,556.5 467,556.5 467.9,559.8 468.7,561.9 469.5,566.2 470.4,569.6 471.3,570.3 472.2,572.4 473,573.6 473.9,574.6 474.8,573.9 475.7,572.7 476.5,572.8 477.4,570.9 478.3,567.9 479.1,566.7 480,567 480.9,568.7 481.7,570.4 482.6,571.7 483.4,572.5 484.3,573.9 485.2,572.8 486.1,571.7 486.9,570.5 487.8,567.2 488.7,567 489.6,565.8 490.4,564.1 491.3,563.5 492.2,564.3 493.1,564.9 493.9,564.7 494.8,567 495.7,566 496.6,563.1 497.4,562.3 498.3,559 499.2,555.8 500,554.3 500.9,554 501.8,556.2 502.6,560.9 503.5,560 504.3,556.5 505.2,558.3 506.1,560.8 507,561.7 507.9,560.1 508.7,562.2 509.6,559.8 510.4,562.5 511.3,560.9 512.2,559.8 513,560.1 513.9,557.4 514.8,548.7 515.6,559.2 516.5,568.7 517.3,566.4 518,562.4 518.8,560.9 519.8,563.4 520.7,565.8 521.7,567 522.6,569.1 523.4,571.1 524.3,572.2 525.2,572.8 526.1,571.5 526.9,570.6 527.8,569.5 528.7,568.7 529.6,565.1 530.4,562.5 531.3,558.3 532.1,557 532.8,554.3 533.6,549.7 534.4,548.7 535.1,550.8 535.8,554.9 536.5,557.4 537.4,559.9 538.3,563.3 539.1,565.8 540,567.8 540.9,568.7 541.8,568.7 542.6,568.8 543.5,568.9 544.3,566.1 545.2,567 546.1,568.5 547,569.7 547.8,573.9 548.7,575.7 549.6,578.9 550.5,577.5 551.3,579.6 552.2,582.6 553.1,583.6 553.9,587.6 554.8,588.7 555.7,586.6 556.5,584.4 557.4,583.4 558.3,581.4 559.1,579.8 560,579 560.9,582.5 561.7,586 562.6,588.7 563.3,592.5 564,598.1 564.7,602.6 565.5,599 566.2,600.1 567,596.5 567.8,593.6 568.5,593.7 569.2,593.6 570,590.4 570.8,591.3 571.5,592.7 572.2,595.8 573,596.5 573.9,598.4 574.8,599.8 575.7,602.6 576.6,602.5 577.4,603.1 578.3,601.7 579.1,603.8 579.8,603.9 580.6,606.8 581.4,607.8 582.4,607.3 583.3,602.9 584.2,602.5 585.2,600 586.1,598.4 587,597.4 587.8,594.1 588.7,592.9 589.6,592.2 590.3,594.6 591.1,599.2 591.8,600.9 592.6,597 593.5,593.3 594.3,590.4 595.2,593.9 596.1,594.4 597,598.3 598,596.8 599,596.7 599.9,595.2 600.9,594.8 601.8,592.2 602.6,589.3 603.5,586 604.4,587.9 605.2,590.9 606.1,596.2 607,598.3 607.8,598.2 608.5,597.5 609.2,597.4 610,599 610.7,595 611.5,592.7 612.2,587.8 613.1,589.2 614,594.3 614.8,593.4 615.7,597.4 616.6,598.4 617.4,599.5 618.3,599.6 619.1,599.4 620,600.9 620.8,597.4 621.5,595.3 622.3,592.2 623.3,596.4 624.2,597.7 625.2,600.9 626.1,600.8 627,601.4 627.8,603.9 628.7,602.6 629.5,598.8 630.2,595.4 631,594.8 631.7,590.4 632.6,597.4 633.5,607 634.4,608.8 635.2,608.6 636.1,610.4 637,608.8 637.8,611.2 638.7,610.6 639.5,607.7 640.2,608.5 641,605.4 641.8,604.5 642.5,606.4 643.2,609.6 643.9,610.6 644.8,610.3 645.7,609 646.5,607.7 647.4,608.6 648.3,607 649.2,607.8 650,607.9 650.9,609.3 651.7,611.6 652.6,611.5 653.5,609.3 654.4,609.5 655.2,610.2 656.1,609.1 657,608 657.9,608.7 658.7,608.6 659.5,609.1 660.4,611.5 661.3,610.3 662.1,610.4 663,608.9 664,608.4 665,610.9 666,610.3 667,610 667.9,611.4 668.9,610.2 669.9,612.5 670.9,611.5 671.8,612.3 672.8,612.3 673.7,616.8 674.7,616.4 675.6,617.6 676.3,616.3 677.1,611 677.8,609.7 678.7,609.4 679.6,611 680.4,613.1 681.3,611.1 682.2,613.2 683.1,611.2 684,609.7 684.8,606.3 685.7,604.5 686.6,604.8 687.4,607 688.3,606.1 689.1,607.1 690,607 690.8,606.8 691.5,606.7 692.2,604 693,603.7 693.7,601.2 694.5,597.5 695.2,595.8 696.1,598.1 696.9,602.7 697.8,604.5 698.5,604.6 699.3,601 700,600.2 700.9,604.9 701.8,607.9 702.7,611.5 703.7,609.8 704.6,606.2 705.5,603.8 706.5,601.9 707.4,601.3 708.2,602.8 709.1,601.7 710,604.9 710.8,603.2 711.7,604.5 712.6,604.7 713.5,604 714.4,603.1 715.2,604.9 716.1,604.3 717,602.8 717.9,604.9 718.7,604.1 719.5,606.6 720.4,608 721.3,608.2 722.2,605.9 723,607.6 723.9,607.7 724.8,606.3 725.5,605.8 726.3,602.2 727,600.2 727.9,600.3 728.8,603.7 729.5,619.3 730.2,623.5 730.9,629.7 731.8,630.3 732.6,628.9 733.5,630.9 734.3,635.6 735.2,638.4 736,635.9 736.7,632.2 737.5,630.3 738.2,626.3 739,626.1 739.8,628.8 740.6,629 741.4,631.7 742.2,631.5 743.1,632.9 744.1,633.9 745,636.2 746,638.5 746.9,640.2 747.7,637.2 748.5,638.3 749.2,636.1 750,634 750.9,633.9 751.7,635 752.4,641.1 753.1,648.2 753.8,652.3 754.5,660.2 755.3,657.1 756.1,652.9 757,650.4 757.8,646.3 758.5,650.9 759.3,654.5 760,657.6 760.9,655.1 761.8,652.9 762.7,652.4 763.6,651.5 764.6,644.6 765.5,639.3 766.5,631.5 767.3,627.2 768.2,626.9 769,622.8 769.9,618.4 770.8,616.3 771.7,614 772.6,621.5 773.5,629.7 774.4,635.5 775.2,638.4 776.1,637 776.9,631 777.8,629.7 778.6,627.8 779.4,627.8 780.2,626.4 781,626.3 782,630.1 782.9,631.3 783.9,633.2 784.8,631.3 785.6,630.9 786.5,629.9 787.4,628 788.3,627.5 789.1,625.9 790,622.8 790.9,621.4 791.7,621.3 792.6,619.3 793.4,618.6 794.1,614.7 794.9,612.3 795.7,616.6 796.5,619.3 797.3,622.8 798.1,624.8 798.9,626.7 799.7,628.7 800.5,632 801.3,635 802.2,626.9 803,620.1 803.9,612.3 804.8,615.8 805.6,618.8 806.5,621 807.3,621 808.2,619.5 809,618.4 809.9,623 810.8,627.9 811.7,632.8 812.6,636.7 813.5,639.2 814.3,638.5 815.1,641.8 816,641.9 816.9,637.8 817.8,635.8 818.5,635.7 819.3,639.9 820,639.5 820.8,641.9 821.6,639.1 822.4,633.4 823.2,629.4 824,627.2 824.8,621.9 825.6,628.8 826.5,634 827.3,634.5 828.1,639.5 828.9,638.9 829.7,641.9 830.7,641.3 831.6,641.1 832.6,638.4 833.5,638.4 834.3,636.1 835.2,635 836.1,632.2 836.9,626.9 837.8,621.9 838.7,624.8 839.5,631 840.4,633.2 841.3,633.7 842.1,633.1 843,634 844,617.7 844.9,601.9 845.7,604.1 846.5,608.6 847.3,611.5 848.2,610.2 849.1,607.3 850,607 850.9,599.8 851.8,593.2 852.5,573.2 853.2,582.8 853.9,594 854.8,595.1 855.6,592.6 856.5,593.8 857.4,593.2 858.4,598.7 859.3,603.6 860.2,607.8 861.2,613.2 862,610 862.8,606.8 863.5,605.1 864.3,603.7 865,601 865.7,595.3 866.4,592.3 867.3,591.5 868.3,589.9 869.2,589.7 870,591.1 870.9,595.2 871.7,598.4 872.5,611 873.4,620.2 874.2,617 874.9,613.8 875.7,611.5 876.5,613.9 877.4,615.8 878.4,612.2 879.3,608.6 880.3,606.3 881.1,605 881.9,605.9 882.7,602.5 883.5,602.8 884.2,604.7 884.9,610 885.6,612.3 886.5,608.4 887.4,605.3 888.3,603.7 889,603.7 889.8,606.7 890.5,607.7 891.3,607 892,607.2 892.8,603.8 893.5,604.6 894.3,601.9 895.1,605.6 896,612.3 896.9,605.3 897.7,598.4 898.5,597.4 899.2,596 900,595 900.9,604.9 901.7,611.5 902.5,613.9 903.2,614.5 904,616.9 904.7,617.6 905.5,608.3 906.2,595.9 907,587 907.9,590.8 908.7,595.2 909.6,600.2 910.5,606.1 911.3,610.1 912.1,612.6 913,617.6 913.9,619.3 914.8,617.6 915.6,605.7 916.5,596.7 917.3,596.1 918.2,595.7 919,596.7 920,591.9 920.9,587 921.6,592.2 922.3,595.6 923,598.4 923.7,603.2 924.5,610.3 925.2,617.6 926.1,620.6 926.9,620.9 927.8,623.7 928.7,625.6 929.5,625.9 930.4,626.3 931.3,629 932.1,631 933,632.3 933.8,631.7 934.5,629.5 935.3,629.7 936,634.7 936.8,637.8 937.5,642.2 938.3,645.4 939.2,644.7 940,646.1 940.9,648 941.8,641.2 942.6,634 943.3,642.5 944,648.9 944.7,649.6 945.3,652 946,652.3 946.9,649.8 947.8,649.1 948.7,650.4 949.6,648.9 950.5,645.3 951.3,637.8 952.2,633.2 953.1,628.6 953.9,624.5 954.8,621 955.5,619.3 956.2,616.6 956.9,615 957.6,608 958.3,601.9 959,616.3 959.7,628.9 960.4,627.2 961,630.2 961.7,628.9 962.6,623.9 963.4,618.9 964.3,611.5 965.1,613.5 965.8,614.2 966.6,614 967.5,608.1 968.3,603.7 969,611.6 969.7,617.9 970.4,624.5 971.3,625.7 972.2,628 973.1,622.1 973.9,614 974.8,607 975.7,606.6 976.5,603.8 977.4,601 978.2,604 979,605.9 979.7,606.5 980.5,608 981.2,611.7 982,613.1 982.8,615.2 983.5,617.6 984.2,627.1 984.9,633.2 985.6,633.9 986.4,633.2 987,623.8 987.5,613.2 988.4,617.1 989.2,617.6 989.9,614.3 990.6,608.4 991.3,606.3 992.2,605.2 993.1,603.3 993.9,601.9 994.8,601 995.7,597.6 996.7,599.8 997.6,602.1 998.6,601.9 999.4,606.4 1000.2,610.5 1000.9,612.1 1001.7,615.8 1002.6,616.4 1003.4,618.9 1004.3,620.2 1005.2,620.2 1006,618.8 1006.9,616.9 1007.8,615 1008.7,617.3 1009.5,619.4 1010.4,622.8 1011.3,620.3 1012.1,620.8 1013,620.2 1013.9,619.3 1014.8,615.1 1015.6,607.9 1016.5,601.9 1017.4,600.9 1018.3,599.3 1019.1,601.4 1020,602 1020.9,605.1 1021.7,608 1022.4,605.9 1023,602.8 1023.7,606.7 1024.5,610.7 1025.2,612.3 1026.1,612.2 1026.9,612.9 1027.8,613.3 1028.7,613.2 1029.6,611 1030.4,613.6 1031.3,612.3 1032.2,612.5 1033.1,611.5 1033.9,609 1034.8,611.1 1035.7,608.9 1036.6,607.8 1037.4,604.4 1038.3,603.7 1039.2,602.7 1040,599.9 1040.8,598.2 1041.7,598.4 1042.6,599.7 1043.5,600.5 1044.3,600.3 1045.2,600.9 1046.1,597.7 1046.9,596.2 1047.8,594.8 1048.7,594 1049.5,595 1050.4,595.1 1051.3,597.7 1052.1,598.7 1053,598.3 1053.9,597.5 1054.8,597.1 1055.7,595.7 1056.6,594.3 1057.4,596.7 1058.3,595.5 1059.1,593.7 1060,594.8 1060.8,593 1061.6,590.8 1062.4,590.3 1063.2,588 1064,585.2 1064.6,590.7 1065.2,599 1066.1,599.5 1067,597.5 1067.8,599 1068.7,599 1069.6,601.6 1070.4,600.9 1071.3,603.5 1072.2,604.4 1073,604 1073.9,603.5 1074.8,605.2 1075.5,603 1076.2,599 1076.9,594.8 1077.6,596 1078.3,597.8 1079,600.9 1079.9,599.9 1080.8,600.7 1081.7,600.9 1082.6,599 1083.4,600.3 1084.1,599.7 1084.9,602.6 1085.8,595.7 1086.6,592.2 1087.4,593.6 1088.2,597.7 1089,599 1089.7,593.3 1090.3,590.1 1091,585.2 1091.7,585.3 1092.3,588.1 1093,590.4 1093.9,589.2 1094.8,587.6 1095.6,583.6 1096.5,583.5 1097.4,587.6 1098.3,593.9 1099.2,594.7 1100,596.5 1100.9,599 1101.8,595.7 1102.6,594.2 1103.5,590.4 1104.3,587.9 1105.2,587.2 1106,587 1106.9,587.1 1107.8,588.3 1108.6,588.4 1109.5,586.3 1110.4,587.8 1111.2,588.8 1111.9,590.1 1112.7,590.2 1113.4,591.3 1114.2,591.3 1115,587.5 1115.8,587.8 1116.6,587.2 1117.4,585.2 1118.2,588 1118.9,585.9 1119.7,588.7 1120.7,583.7 1121.6,576.6 1122.6,571.3 1123.4,571.1 1124.3,569.2 1125.2,569 1126,567 1126.9,565.9 1127.8,568.4 1128.7,567 1129.6,553.9 1130.5,553.5 1131.3,554.9 1132.2,553.9 1133.1,551.5 1133.9,549.2 1134.8,548.7 1135.7,548.6 1136.5,549.6 1137.4,544.7 1138.2,540.1 1139.1,533.2 1140,527.8 1140.9,525.9 1141.8,526.7 1142.6,524.7 1143.5,522.6 1144.4,523.7 1145.2,525.7 1146.1,525.7 1147,527.8 1147.9,528 1148.7,527.8 1149.6,527.5 1150.4,527.1 1151.3,528.7 1152.2,533.3 1153,540.7 1153.9,545.2 1154.7,545.2 1155.4,543.2 1156.2,543.9 1156.9,541.7 1157.6,534.7 1158.3,530.9 1159,524.3 1159.9,525.2 1160.8,522.8 1161.7,524.3 1162.4,523.5 1163.1,521.2 1163.8,518.3 1164.7,519.6 1165.7,521.1 1166.6,522.6 1167.4,530.3 1168.3,537.4 1169.2,537.1 1170,535.4 1170.9,536.5 1171.8,536.5 1172.7,535.1 1173.7,531.4 1174.6,527.8 1175.5,527.5 1176.5,523.3 1177.4,520.9 1178.3,519.2 1179.2,519.9 1180,517.8 1180.9,518.3 1181.8,517.7 1182.6,516.8 1183.5,514.1 1184.3,513.4 1185.2,513 1186.1,516.2 1186.9,517.8 1187.8,521.7 1188.6,520 1189.4,516.8 1190.2,512.1 1191,510.4 1191.7,514.8 1192.3,518.8 1193,522.6 1193.9,527.8 1194.8,533.9 1195.7,535.5 1196.5,535.9 1197.4,537 1198.3,538.3 1199.2,538.8 1200,540.3 1200.9,540.9 1201.5,544 1202,550.4 1202.8,547.8 1203.5,543.3 1204.3,541.7 1205.2,538.2 1206,537.6 1206.9,533 1207.8,531.3 1208.7,531.3 1209.5,529.6 1210.4,531.7 1211.3,529.6 1212.2,530.4 1213,527.3 1213.9,527 1214.7,531.9 1215.5,535.3 1216.2,536.4 1217,540.9 1217.7,534.7 1218.3,528.2 1219,523.5 1219.9,525.7 1220.8,529.9 1221.7,533 1222.6,529 1223.4,524.8 1224.3,520.9 1225.2,517.8 1226.1,516.9 1227,514.8 1227.9,515.4 1228.7,512.6 1229.6,512.8 1230.4,510.4 1231.3,510.4" fill="none" stroke="#ff0000" stroke-width="2.05" stroke-linejoin="miter"/>
</svg>
<div class="band" style="top:253px;height:1.2px;background:#000"></div>
<div class="band" style="top:254.1px;height:3.2px"></div>
<div class="band" style="top:257.2px;height:0.9px;background:#949494"></div>
<div class="band" style="top:496px;height:1.2px;background:#000"></div>
<div class="band" style="top:497.1px;height:3.2px"></div>
<div class="band" style="top:500.2px;height:0.9px;background:#949494"></div>
<div id="txt">
<div class="m tl" style="left:16.9px;top:239.5px"><span class="l" style="margin-right:-4.10px">03</span></div>
<div class="m tl" style="left:63.9px;top:239.5px"><span class="l" style="margin-right:-4.10px">04</span></div>
<div class="m tl" style="left:104.6px;top:239.5px"><span class="l" style="margin-right:-4.10px">05</span></div>
<div class="m tl" style="left:107.2px;top:239.5px"><span class="l" style="margin-right:-4.10px">08</span></div>
<div class="m tl" style="left:140px;top:239.5px"><span class="l" style="margin-right:-4.10px">09</span></div>
<div class="m tl" style="left:201.4px;top:239.5px"><span class="l" style="margin-right:-4.10px">10</span></div>
<div class="m tl" style="left:263.1px;top:239.5px"><span class="l" style="margin-right:-4.10px">11</span></div>
<div class="m tl" style="left:323.9px;top:239.5px"><span class="l" style="margin-right:-4.10px">12</span></div>
<div class="m tl" style="left:383.9px;top:239.5px"><span class="l" style="margin-right:-4.10px">13</span></div>
<div class="m tl" style="left:444px;top:239.5px"><span class="l" style="margin-right:-4.10px">14</span></div>
<div class="m tl" style="left:490.1px;top:239.5px"><span class="l" style="margin-right:-4.10px">15</span></div>
<div class="m tl" style="left:515.8px;top:239.5px"><span class="l" style="margin-right:-4.10px">16</span></div>
<div class="m tl" style="left:545.9px;top:239.5px"><span class="l" style="margin-right:-4.10px">17</span></div>
<div class="m tl" style="left:607.1px;top:239.5px"><span class="l" style="margin-right:-4.10px">18</span></div>
<div class="m tl" style="left:660.1px;top:239.5px"><span class="l" style="margin-right:-4.10px">19</span></div>
<div class="m tl" style="left:720.1px;top:239.5px"><span class="l" style="margin-right:-4.10px">20</span></div>
<div class="m tl" style="left:781px;top:239.5px"><span class="l" style="margin-right:-4.10px">21</span></div>
<div class="m tl" style="left:841.8px;top:239.5px"><span class="l" style="margin-right:-4.10px">22</span></div>
<div class="m tl" style="left:904px;top:239.5px"><span class="l" style="margin-right:-4.10px">23</span></div>
<div class="m tl" style="left:964.9px;top:239.5px"><span class="l" style="margin-right:-4.10px">00</span></div>
<div class="m tl" style="left:1024px;top:239.5px"><span class="l" style="margin-right:-4.10px">01</span></div>
<div class="m tl" style="left:1075px;top:239.5px"><span class="l" style="margin-right:-4.10px">02</span></div>
<div class="m tl" style="left:1111.8px;top:239.5px"><span class="l" style="margin-right:-4.10px">03</span></div>
<div class="m tl" style="left:1167.8px;top:239.5px"><span class="l" style="margin-right:-4.10px">04</span></div>
<div class="m tl" style="left:1212.9px;top:239.5px"><span class="l" style="margin-right:-4.10px">05</span></div>
<div class="m tl" style="left:124.4px;top:223.5px"><span class="l" style="margin-right:-4.10px">10</span></div>
<div class="m tl" style="left:965.4px;top:223.5px"><span class="l" style="margin-right:-4.10px">11</span></div>
<div class="m tl" style="left:16.9px;top:483.1px"><span class="l" style="margin-right:-4.10px">03</span></div>
<div class="m tl" style="left:63.9px;top:483.1px"><span class="l" style="margin-right:-4.10px">04</span></div>
<div class="m tl" style="left:104.6px;top:483.1px"><span class="l" style="margin-right:-4.10px">05</span></div>
<div class="m tl" style="left:107.2px;top:483.1px"><span class="l" style="margin-right:-4.10px">08</span></div>
<div class="m tl" style="left:140px;top:483.1px"><span class="l" style="margin-right:-4.10px">09</span></div>
<div class="m tl" style="left:201.4px;top:483.1px"><span class="l" style="margin-right:-4.10px">10</span></div>
<div class="m tl" style="left:263.1px;top:483.1px"><span class="l" style="margin-right:-4.10px">11</span></div>
<div class="m tl" style="left:323.9px;top:483.1px"><span class="l" style="margin-right:-4.10px">12</span></div>
<div class="m tl" style="left:383.9px;top:483.1px"><span class="l" style="margin-right:-4.10px">13</span></div>
<div class="m tl" style="left:444px;top:483.1px"><span class="l" style="margin-right:-4.10px">14</span></div>
<div class="m tl" style="left:490.1px;top:483.1px"><span class="l" style="margin-right:-4.10px">15</span></div>
<div class="m tl" style="left:515.8px;top:483.1px"><span class="l" style="margin-right:-4.10px">16</span></div>
<div class="m tl" style="left:545.9px;top:483.1px"><span class="l" style="margin-right:-4.10px">17</span></div>
<div class="m tl" style="left:607.1px;top:483.1px"><span class="l" style="margin-right:-4.10px">18</span></div>
<div class="m tl" style="left:660.1px;top:483.1px"><span class="l" style="margin-right:-4.10px">19</span></div>
<div class="m tl" style="left:720.1px;top:483.1px"><span class="l" style="margin-right:-4.10px">20</span></div>
<div class="m tl" style="left:781px;top:483.1px"><span class="l" style="margin-right:-4.10px">21</span></div>
<div class="m tl" style="left:841.8px;top:483.1px"><span class="l" style="margin-right:-4.10px">22</span></div>
<div class="m tl" style="left:904px;top:483.1px"><span class="l" style="margin-right:-4.10px">23</span></div>
<div class="m tl" style="left:964.9px;top:483.1px"><span class="l" style="margin-right:-4.10px">00</span></div>
<div class="m tl" style="left:1024px;top:483.1px"><span class="l" style="margin-right:-4.10px">01</span></div>
<div class="m tl" style="left:1075px;top:483.1px"><span class="l" style="margin-right:-4.10px">02</span></div>
<div class="m tl" style="left:1111.8px;top:483.1px"><span class="l" style="margin-right:-4.10px">03</span></div>
<div class="m tl" style="left:1167.8px;top:483.1px"><span class="l" style="margin-right:-4.10px">04</span></div>
<div class="m tl" style="left:1212.9px;top:483.1px"><span class="l" style="margin-right:-4.10px">05</span></div>
<div class="m tl" style="left:124.4px;top:467.1px"><span class="l" style="margin-right:-4.10px">10</span></div>
<div class="m tl" style="left:965.4px;top:467.1px"><span class="l" style="margin-right:-4.10px">11</span></div>
<div class="m tl" style="left:16.9px;top:670.7px"><span class="l" style="margin-right:-4.10px">03</span></div>
<div class="m tl" style="left:63.9px;top:670.7px"><span class="l" style="margin-right:-4.10px">04</span></div>
<div class="m tl" style="left:104.6px;top:670.7px"><span class="l" style="margin-right:-4.10px">05</span></div>
<div class="m tl" style="left:107.2px;top:670.7px"><span class="l" style="margin-right:-4.10px">08</span></div>
<div class="m tl" style="left:140px;top:670.7px"><span class="l" style="margin-right:-4.10px">09</span></div>
<div class="m tl" style="left:201.4px;top:670.7px"><span class="l" style="margin-right:-4.10px">10</span></div>
<div class="m tl" style="left:263.1px;top:670.7px"><span class="l" style="margin-right:-4.10px">11</span></div>
<div class="m tl" style="left:323.9px;top:670.7px"><span class="l" style="margin-right:-4.10px">12</span></div>
<div class="m tl" style="left:383.9px;top:670.7px"><span class="l" style="margin-right:-4.10px">13</span></div>
<div class="m tl" style="left:444px;top:670.7px"><span class="l" style="margin-right:-4.10px">14</span></div>
<div class="m tl" style="left:490.1px;top:670.7px"><span class="l" style="margin-right:-4.10px">15</span></div>
<div class="m tl" style="left:515.8px;top:670.7px"><span class="l" style="margin-right:-4.10px">16</span></div>
<div class="m tl" style="left:545.9px;top:670.7px"><span class="l" style="margin-right:-4.10px">17</span></div>
<div class="m tl" style="left:607.1px;top:670.7px"><span class="l" style="margin-right:-4.10px">18</span></div>
<div class="m tl" style="left:660.1px;top:670.7px"><span class="l" style="margin-right:-4.10px">19</span></div>
<div class="m tl" style="left:720.1px;top:670.7px"><span class="l" style="margin-right:-4.10px">20</span></div>
<div class="m tl" style="left:781px;top:670.7px"><span class="l" style="margin-right:-4.10px">21</span></div>
<div class="m tl" style="left:841.8px;top:670.7px"><span class="l" style="margin-right:-4.10px">22</span></div>
<div class="m tl" style="left:904px;top:670.7px"><span class="l" style="margin-right:-4.10px">23</span></div>
<div class="m tl" style="left:964.9px;top:670.7px"><span class="l" style="margin-right:-4.10px">00</span></div>
<div class="m tl" style="left:1024px;top:670.7px"><span class="l" style="margin-right:-4.10px">01</span></div>
<div class="m tl" style="left:1075px;top:670.7px"><span class="l" style="margin-right:-4.10px">02</span></div>
<div class="m tl" style="left:1111.8px;top:670.7px"><span class="l" style="margin-right:-4.10px">03</span></div>
<div class="m tl" style="left:1167.8px;top:670.7px"><span class="l" style="margin-right:-4.10px">04</span></div>
<div class="m tl" style="left:1212.9px;top:670.7px"><span class="l" style="margin-right:-4.10px">05</span></div>
<div class="m tl" style="left:124.4px;top:654.7px"><span class="l" style="margin-right:-4.10px">10</span></div>
<div class="m tl" style="left:965.4px;top:654.7px"><span class="l" style="margin-right:-4.10px">11</span></div>
<div class="m" style="left:7.5px;top:48.3px"><span class="j">時刻</span><span class="l" style="margin-right:-14.35px">:05:30 </span><span class="j">始値</span><span class="l" style="margin-right:-14.35px">:6,423 </span><span class="j">高値</span><span class="l" style="margin-right:-14.35px">:6,423 </span><span class="j">安値</span><span class="l" style="margin-right:-14.35px">:6,423 </span><span class="j">終値</span><span class="l" style="margin-right:-12.30px">:6,423</span></div>
<div class="m" style="left:7.5px;top:261.4px"><span class="j">時刻</span><span class="l" style="margin-right:-14.35px">:05:30 </span><span class="j">始値</span><span class="l" style="margin-right:-14.35px">:4,372 </span><span class="j">高値</span><span class="l" style="margin-right:-14.35px">:4,372 </span><span class="j">安値</span><span class="l" style="margin-right:-14.35px">:4,372 </span><span class="j">終値</span><span class="l" style="margin-right:-12.30px">:4,372</span></div>
<div class="m" style="left:7.5px;top:504.9px"><span class="l" style="margin-right:-2.05px">[</span><span class="j">金</span><span class="l" style="margin-right:-39.21px"> 22/04 6,423<i class="x">×</i>1.00]</span><span class="j">－</span><span class="l" style="margin-right:-2.05px">[</span><span class="j">白金</span><span class="l" style="margin-right:-41.26px"> 22/04 4,372<i class="x">×</i>1.00] </span><span class="j">終値</span><span class="l" style="margin-right:-2.05px"> </span><span class="j">時刻</span><span class="l" style="margin-right:-24.61px">:05:30 2,051</span></div>
<div class="m" style="left:1236px;top:68.7px"><span class="l" style="margin-right:-10.25px">6,440</span></div>
<div class="m" style="left:1236px;top:100.6px"><span class="l" style="margin-right:-10.25px">6,430</span></div>
<div class="m" style="left:1236px;top:163.3px"><span class="l" style="margin-right:-10.25px">6,410</span></div>
<div class="m" style="left:1236px;top:194.7px"><span class="l" style="margin-right:-10.25px">6,400</span></div>
<div class="m" style="left:1236px;top:226.1px"><span class="l" style="margin-right:-10.25px">6,390</span></div>
<div style="position:absolute;left:1236px;top:46px;width:59px;height:7px;overflow:hidden"><div class="m" style="left:1px;top:-9.5px"><span class="l" style="margin-right:-10.25px">6,450</span></div></div>
<div class="m" style="left:1236px;top:314.5px"><span class="l" style="margin-right:-10.25px">4,425</span></div>
<div class="m" style="left:1236px;top:377.9px"><span class="l" style="margin-right:-10.25px">4,400</span></div>
<div class="m" style="left:1236px;top:440.9px"><span class="l" style="margin-right:-10.25px">4,375</span></div>
<div style="position:absolute;left:1236px;top:259px;width:59px;height:7px;overflow:hidden"><div class="m" style="left:1px;top:-9.5px"><span class="l" style="margin-right:-10.25px">4,450</span></div></div>
<div class="m" style="left:1236px;top:561.9px"><span class="l" style="margin-right:-10.25px">2,025</span></div>
<div class="m" style="left:1236px;top:622.7px"><span class="l" style="margin-right:-10.25px">2,000</span></div>
<div style="position:absolute;left:1236px;top:676px;width:59px;height:7.6px;overflow:hidden"><div class="m" style="left:1px;top:7px"><span class="l" style="margin-right:-10.25px">1,975</span></div></div>
<div class="box" style="top:122.6px"><b>6,423</b></div>
<div class="box" style="top:448.6px"><b style="top:5.4px">4,372</b></div>
<div class="box" style="top:501.8px;height:19px;border-top:0"><b style="top:3px">2,051</b></div>
</div>
</body></html>
